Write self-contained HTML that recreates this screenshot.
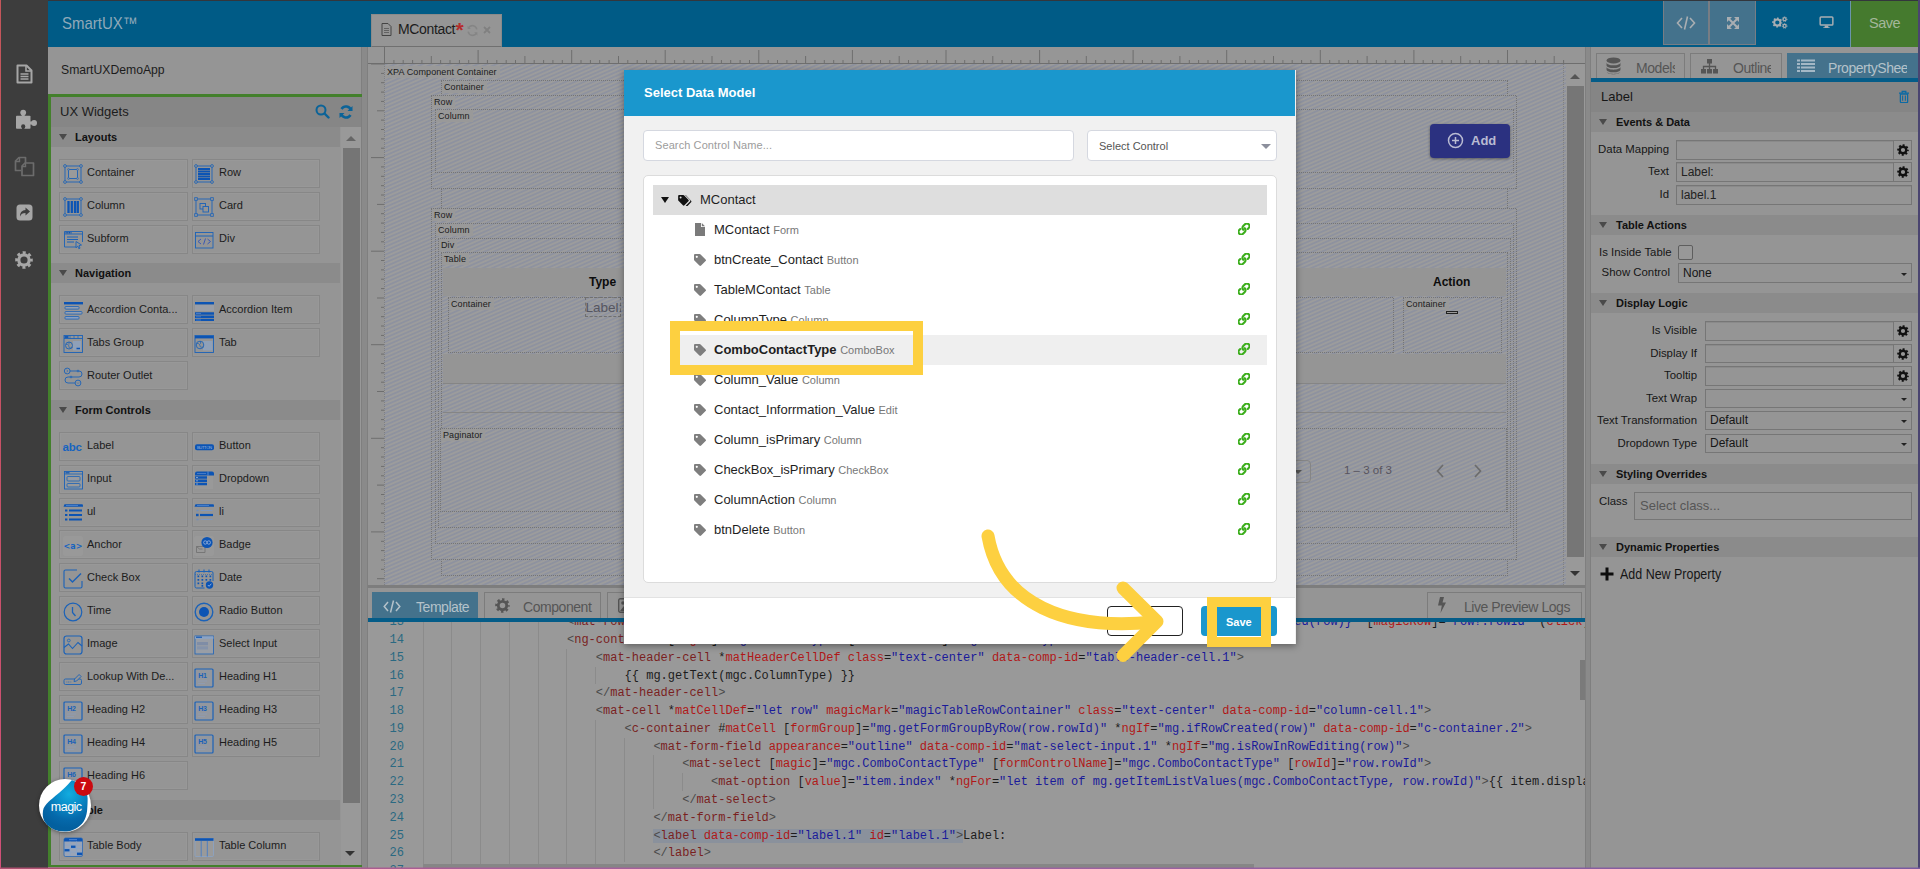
<!DOCTYPE html><html><head><meta charset="utf-8"><title>SmartUX</title><style>
*{box-sizing:border-box;margin:0;padding:0}
html,body{width:1920px;height:869px;overflow:hidden;background:#959595;font-family:"Liberation Sans",sans-serif;font-size:11px;color:#1f1f1f}
.abs{position:absolute}
#root{position:absolute;left:0;top:0;width:1920px;height:869px;overflow:hidden;background:#959595}
.t{position:absolute;white-space:nowrap;line-height:1}
/* left rail */
#rail{left:0;top:0;width:48px;height:869px;background:#3d3d3d}
#topbar{left:48px;top:0;width:1872px;height:47px;background:#005b86}
/* widgets */
.wb{position:absolute;width:129px;height:29px;border:1px solid #878787;background:#959595;box-shadow:inset 0 0 0 1px #989898}
.wb span{position:absolute;left:27px;top:6px;font-size:11px;line-height:13px;color:#1c1c1c;white-space:nowrap}
.wb svg{position:absolute;left:3px;top:4px;width:20px;height:20px}
.wr{width:128px}.wr span{left:26px}.wr svg{left:1px}
.wd span{top:7px}.wd svg{top:5px}
.sec{position:absolute;left:51px;width:289px;height:20px;background:#8b8b8b}
.sec b{position:absolute;left:24px;top:4px;font-size:11px;line-height:13px;color:#111}
.sec i{position:absolute;left:8px;top:7px;width:0;height:0;border-left:4px solid transparent;border-right:4px solid transparent;border-top:6px solid #4a4a4a}
</style></head><body><div id="root">
<div id="topbar" class="abs"></div>
<div class="t" style="left:62px;top:15px;font-size:17px;color:#8fa9b9;transform:scaleX(.88);transform-origin:0 0">SmartUX™</div>
<div class="abs" style="left:371px;top:14px;width:131px;height:33px;background:#959595;border:1px solid #8a8a8a;border-bottom:1px solid #707070"></div>
<svg class="abs" style="left:381px;top:23px" width="11" height="13" viewBox="0 0 11 13"><path d="M1 .5h6l3 3v9H1z" fill="none" stroke="#444" stroke-width="1"/><path d="M3 5.500h5M3 7.500h5M3 9.500h5" stroke="#555" stroke-width=".8"/></svg>
<div class="t" style="left:398px;top:22px;font-size:14px;color:#1c1c1c;letter-spacing:-0.35px">MContact</div>
<div class="t" style="left:455.500px;top:18.500px;font-size:21px;font-weight:700;color:#b42c2c">*</div>
<svg class="abs" style="left:466px;top:23.500px" width="13" height="13" viewBox="0 0 12 12"><path d="M10 5A4.2 4.2 0 0 0 2.3 3.5M2 7a4.2 4.2 0 0 0 7.7 1.5" fill="none" stroke="#858585" stroke-width="1.4"/><path d="M1.5 1.5v3h3zM10.5 10.5v-3h-3z" fill="#858585"/></svg>
<svg class="abs" style="left:483px;top:26px" width="8" height="8" viewBox="0 0 8 8"><path d="M1 1l6 6M7 1l-6 6" stroke="#808080" stroke-width="1.8"/></svg>
<div class="abs" style="left:1663px;top:1px;width:46px;height:44px;background:#44728c;border:1px solid #787d84;border-top:none"></div>
<div class="abs" style="left:1709px;top:1px;width:47px;height:44px;background:#44728c;border:1px solid #787d84;border-top:none"></div>
<svg class="abs" style="left:1676px;top:15px" width="20" height="16" viewBox="0 0 20 16"><path d="M6 3L1.5 8 6 13M14 3l4.500 5L14 13M11.500 1.500L8.500 14.500" fill="none" stroke="#a9aeb2" stroke-width="1.6"/></svg>
<svg class="abs" style="left:1726px;top:16px" width="14" height="14" viewBox="0 0 14 14"><path d="M2.500 2.500l9 9M11.500 2.500l-9 9" stroke="#a9aeb2" stroke-width="2"/><path d="M1 1h5L1 6zM13 1H8l5 5zM1 13h5L1 8zM13 13H8l5-5z" fill="#a9aeb2"/></svg>
<svg class="abs" style="left:1772px;top:15px" width="16" height="15" viewBox="0 0 16 15"><circle cx="5.300" cy="7.500" r="3.100" fill="none" stroke="#a9aeb2" stroke-width="2"/><circle cx="5.300" cy="7.500" r="4.300" fill="none" stroke="#a9aeb2" stroke-width="1.600" stroke-dasharray="1.700 1.677" stroke-dashoffset=".8"/><circle cx="12.600" cy="4.200" r="1.500" fill="none" stroke="#a9aeb2" stroke-width="1.300"/><circle cx="12.600" cy="4.200" r="2.400" fill="none" stroke="#a9aeb2" stroke-width=".9" stroke-dasharray=".95 .935"/><circle cx="12.600" cy="10.900" r="1.500" fill="none" stroke="#a9aeb2" stroke-width="1.300"/><circle cx="12.600" cy="10.900" r="2.400" fill="none" stroke="#a9aeb2" stroke-width=".9" stroke-dasharray=".95 .935"/></svg>
<svg class="abs" style="left:1819px;top:15.500px" width="15" height="12.700" viewBox="0 0 16 14"><rect x="1" y="1" width="14" height="9" rx="1" fill="none" stroke="#a9aeb2" stroke-width="1.600"/><path d="M6 10.500h4v2h1.500v1h-7v-1H6z" fill="#a9aeb2"/></svg>
<div class="abs" style="left:1851px;top:0;width:67px;height:47px;background:#457a2e"></div>
<div class="abs" style="left:1850px;top:1px;width:1px;height:46px;background:#6a94ac"></div>
<div class="t" style="left:1869px;top:16px;font-size:14.500px;letter-spacing:-.5px;color:#a4b79a">Save</div>
<div class="abs" style="left:0;top:0;width:1920px;height:1px;background:#33363c"></div>
<div id="rail" class="abs"></div>
<div class="abs" style="left:0;top:0;width:1px;height:869px;background:linear-gradient(180deg,#c4565a,#c85068 60%,#d05078)"></div>
<svg class="abs" style="left:16px;top:63.500px" width="17" height="20" viewBox="0 0 17 20"><path d="M1.500 1.500h9l5 5v12h-14z" fill="none" stroke="#a6a6a6" stroke-width="2" stroke-linejoin="round"/><path d="M10 1.500v5.500h5.500" fill="none" stroke="#a6a6a6" stroke-width="1.600"/><path d="M4.500 10h8M4.500 12.500h8M4.500 15h8" stroke="#a6a6a6" stroke-width="1.400"/></svg>
<svg class="abs" style="left:15px;top:108px" width="24" height="23" viewBox="15 108 24 23"><rect x="16" y="115.700" width="14.500" height="13" rx=".8" fill="#a6a6a6"/><circle cx="23.200" cy="112.600" r="2.900" fill="#a6a6a6"/><rect x="21.700" y="113" width="3" height="4" fill="#a6a6a6"/><circle cx="34.100" cy="123" r="2.900" fill="#a6a6a6"/><rect x="30" y="121.500" width="3.500" height="3" fill="#a6a6a6"/><circle cx="23.200" cy="126.400" r="2.100" fill="#3d3d3d"/><rect x="22" y="127" width="2.400" height="2" fill="#3d3d3d"/></svg>
<svg class="abs" style="left:14px;top:156px" width="21" height="21" viewBox="0 0 21 21"><path d="M7 14.500H1.500V5l3.500-3.500h6.500V7" fill="none" stroke="#6c6c6c" stroke-width="1.700" stroke-linejoin="round"/><path d="M5.500 1.500V5.500H1.500" fill="none" stroke="#6c6c6c" stroke-width="1.400"/><path d="M8 10l3-3h8.500v12.500H8z" fill="none" stroke="#6c6c6c" stroke-width="1.700" stroke-linejoin="round"/><path d="M11.500 7v3.500H8" fill="none" stroke="#6c6c6c" stroke-width="1.400"/></svg>
<svg class="abs" style="left:16px;top:204px" width="17" height="17" viewBox="0 0 17 17"><rect x=".5" y=".5" width="16" height="16" rx="3.500" fill="#a6a6a6"/><path d="M9.500 3.500l4.500 4-4.500 4V9C6.500 9 5 10 4 12.500 4 8.500 6 6.300 9.500 6z" fill="#3d3d3d"/></svg>
<svg class="abs" style="left:15px;top:251px" width="18" height="18" viewBox="0 0 18 18"><circle cx="9" cy="9" r="5.200" fill="none" stroke="#a6a6a6" stroke-width="3.200"/><circle cx="9" cy="9" r="7.300" fill="none" stroke="#a6a6a6" stroke-width="3" stroke-dasharray="3 2.730" stroke-dashoffset="1.500"/></svg>
<div class="t" style="left:61px;top:64px;font-size:12.200px;color:#1c1c1c">SmartUXDemoApp</div>
<div class="abs" style="left:361px;top:47px;width:7px;height:822px;background:#8a8a8a;border-left:1px solid #7f7f7f;border-right:1px solid #7f7f7f"></div>
<div class="abs" style="left:48px;top:94px;width:314px;height:773px;border:3px solid #43802c;border-right:none;border-bottom-width:2px"></div>
<div class="abs" style="left:51px;top:97px;width:310px;height:30px;background:#868686"></div>
<div class="t" style="left:60px;top:105px;font-size:13px;color:#1c1c1c">UX Widgets</div>
<svg class="abs" style="left:315px;top:104px" width="15" height="15" viewBox="0 0 15 15"><circle cx="6" cy="6" r="4.500" fill="none" stroke="#0b6398" stroke-width="2"/><path d="M9.500 9.500l4 4" stroke="#0b6398" stroke-width="2.400" stroke-linecap="round"/></svg>
<svg class="abs" style="left:339px;top:105px" width="14" height="14" viewBox="0 0 14 14"><path d="M12 5.500A5.200 5.200 0 0 0 2.500 4M2 8.500A5.200 5.200 0 0 0 11.500 10" fill="none" stroke="#0b6398" stroke-width="2.500"/><path d="M13.500 1v5h-5zM.5 13V8h5z" fill="#0b6398"/></svg>
<div class="abs" style="left:341px;top:127px;width:20px;height:738px;background:#999"></div>
<div class="abs" style="left:343px;top:148px;width:17px;height:655px;background:#757575"></div>
<div class="abs" style="left:346px;top:136px;width:0;height:0;border-left:5px solid transparent;border-right:5px solid transparent;border-bottom:5px solid #666"></div>
<div class="abs" style="left:345px;top:851px;width:0;height:0;border-left:5px solid transparent;border-right:5px solid transparent;border-top:5px solid #333"></div>
<div class="sec" style="top:127px"><i></i><b>Layouts</b></div>
<div class="sec" style="top:263px"><i></i><b>Navigation</b></div>
<div class="sec" style="top:400px"><i></i><b>Form Controls</b></div>
<div class="sec" style="top:800px"><i></i><b>Table</b></div>
<div class="wb" style="left:59px;top:159px"><svg viewBox="0 0 20 20"><rect x="2" y="2" width="16" height="16" fill="none" stroke="#1b62b8" stroke-width=".9"/><rect x="5.500" y="5.500" width="9" height="9" fill="#9a9a9a" stroke="#1b62b8" stroke-width=".9"/><circle cx="2" cy="2" r="1.4" fill="#959595" stroke="#1b62b8" stroke-width=".8"/><circle cx="18" cy="2" r="1.4" fill="#959595" stroke="#1b62b8" stroke-width=".8"/><circle cx="2" cy="18" r="1.4" fill="#959595" stroke="#1b62b8" stroke-width=".8"/><circle cx="18" cy="18" r="1.4" fill="#959595" stroke="#1b62b8" stroke-width=".8"/><circle cx="5.5" cy="5.5" r=".9" fill="#959595" stroke="#1b62b8" stroke-width=".6"/><circle cx="14.5" cy="5.5" r=".9" fill="#959595" stroke="#1b62b8" stroke-width=".6"/><circle cx="5.5" cy="14.5" r=".9" fill="#959595" stroke="#1b62b8" stroke-width=".6"/><circle cx="14.5" cy="14.5" r=".9" fill="#959595" stroke="#1b62b8" stroke-width=".6"/></svg><span>Container</span></div>
<div class="wb wr" style="left:192px;top:159px"><svg viewBox="0 0 20 20"><rect x="2" y="2" width="16" height="16" fill="none" stroke="#1b62b8" stroke-width=".9"/><path d="M4 5h12M4 7.500h12M4 10h12M4 12.500h12M4 15h12" stroke="#0c54b4" stroke-width="1.900"/><circle cx="2" cy="2" r="1.4" fill="#959595" stroke="#1b62b8" stroke-width=".8"/><circle cx="18" cy="2" r="1.4" fill="#959595" stroke="#1b62b8" stroke-width=".8"/><circle cx="2" cy="18" r="1.4" fill="#959595" stroke="#1b62b8" stroke-width=".8"/><circle cx="18" cy="18" r="1.4" fill="#959595" stroke="#1b62b8" stroke-width=".8"/></svg><span>Row</span></div>
<div class="wb" style="left:59px;top:192px"><svg viewBox="0 0 20 20"><rect x="2" y="2" width="16" height="16" fill="none" stroke="#1b62b8" stroke-width=".9"/><path d="M5.500 4v12M8.800 4v12M12 4v12M14.800 4v12" stroke="#0c54b4" stroke-width="2.300"/><circle cx="2" cy="2" r="1.4" fill="#959595" stroke="#1b62b8" stroke-width=".8"/><circle cx="18" cy="2" r="1.4" fill="#959595" stroke="#1b62b8" stroke-width=".8"/><circle cx="2" cy="18" r="1.4" fill="#959595" stroke="#1b62b8" stroke-width=".8"/><circle cx="18" cy="18" r="1.4" fill="#959595" stroke="#1b62b8" stroke-width=".8"/></svg><span>Column</span></div>
<div class="wb wr" style="left:192px;top:192px"><svg viewBox="0 0 20 20"><rect x="2" y="2" width="16" height="16" fill="none" stroke="#1b62b8" stroke-width=".9"/><rect x="0.7" y="0.7" width="2.600" height="2.600" fill="#959595" stroke="#1b62b8" stroke-width=".8"/><rect x="16.7" y="0.7" width="2.600" height="2.600" fill="#959595" stroke="#1b62b8" stroke-width=".8"/><rect x="0.7" y="16.7" width="2.600" height="2.600" fill="#959595" stroke="#1b62b8" stroke-width=".8"/><rect x="16.7" y="16.7" width="2.600" height="2.600" fill="#959595" stroke="#1b62b8" stroke-width=".8"/><rect x="6" y="6.500" width="5.500" height="5.500" fill="none" stroke="#1b62b8" stroke-width=".9"/><rect x="9" y="9.500" width="5.500" height="5.500" fill="#959595" stroke="#1b62b8" stroke-width=".9"/></svg><span>Card</span></div>
<div class="wb" style="left:59px;top:225px"><svg viewBox="0 0 20 20"><path d="M13 17H1.500V1.500h18V12" fill="none" stroke="#1b62b8" stroke-width=".9"/><path d="M1.500 4h18" stroke="#1b62b8" stroke-width=".9"/><path d="M2.500 2.700h6" stroke="#0c54b4" stroke-width="1.400" stroke-dasharray="1.200 .5"/><path d="M4 7h11M4 9.500h11M4 12h7" stroke="#1b62b8" stroke-width="1"/><path d="M13 11.500l5.500 3.500-2.500.6 1 2.600-1.200.5-1-2.600-1.800 1.700z" fill="#959595" stroke="#1b62b8" stroke-width=".9" stroke-linejoin="round"/></svg><span>Subform</span></div>
<div class="wb wr" style="left:192px;top:225px"><svg viewBox="0 0 20 20"><rect x="1.500" y="2.500" width="17.500" height="15.500" fill="none" stroke="#1b62b8" stroke-width=".9"/><path d="M1.500 6h17.500" stroke="#1b62b8" stroke-width="1"/><path d="M7 9L4 11.500 7 14M13.500 9l3 2.500-3 2.500M11.500 8.500l-2 6" fill="none" stroke="#3a58b4" stroke-width="1"/></svg><span>Div</span></div>
<div class="wb wd" style="left:59px;top:295px"><svg viewBox="0 0 20 20"><path d="M1 2.200h19" stroke="#0c54b4" stroke-width="2.400"/><rect x="2" y="5.500" width="14" height="2.600" rx=".8" fill="#96a0b0" stroke="#1b62b8" stroke-width=".8"/><rect x="2" y="10.500" width="17" height="2.600" rx=".8" fill="#96a0b0" stroke="#1b62b8" stroke-width=".8"/><rect x="2" y="15.500" width="14" height="2.600" rx=".8" fill="#8aa0c0" stroke="#1b62b8" stroke-width=".8"/></svg><span>Accordion Conta...</span></div>
<div class="wb wr wd" style="left:192px;top:295px"><svg viewBox="0 0 20 20"><path d="M1 2.200h19" stroke="#0c54b4" stroke-width="2.400"/><rect x="1" y="4" width="19" height="6" fill="#9a9ea6"/><path d="M1 12.500h19M1 15.800h19M1 19h19" stroke="#0c54b4" stroke-width="2.500"/><path d="M2 12.500h5M2 15.800h5M2 19h5" stroke="#5a8ad0" stroke-width=".7"/></svg><span>Accordion Item</span></div>
<div class="wb wd" style="left:59px;top:328px"><svg viewBox="0 0 20 20"><rect x="1" y="1.500" width="18.500" height="17" fill="none" stroke="#1b62b8" stroke-width=".9"/><path d="M1 4.500h18.500" stroke="#1b62b8" stroke-width=".9"/><path d="M1.500 3h4" stroke="#0c54b4" stroke-width="1.800"/><path d="M7 1.500v3M11 1.500v3M15 1.500v3" stroke="#1b62b8" stroke-width=".7"/><rect x="10" y="7" width="8" height="9.500" fill="#8fa0b8"/><path d="M13.500 14.500h3.500" stroke="#0c54b4" stroke-width="1.500"/><circle cx="6" cy="11.500" r="3.500" fill="none" stroke="#1b62b8" stroke-width=".9"/><path d="M3 10.500c2-1 3 1 3 2.500s2 1 3.500.5M6 8v2.500" fill="none" stroke="#1b62b8" stroke-width=".7"/></svg><span>Tabs Group</span></div>
<div class="wb wr wd" style="left:192px;top:328px"><svg viewBox="0 0 20 20"><rect x="1" y="1.500" width="18.500" height="17" fill="none" stroke="#1b62b8" stroke-width=".9"/><path d="M1 3.200h18.500" stroke="#0c54b4" stroke-width="2.400"/><rect x="9" y="7" width="9.500" height="9.500" fill="#8fa0b8"/><circle cx="6" cy="11" r="3.800" fill="#959595" stroke="#1b62b8" stroke-width=".9"/><path d="M2.800 9.500c2-.5 3.200 1 3.200 2.500s2 1.500 3.500.8M6.500 7.300v2.500" fill="none" stroke="#1b62b8" stroke-width=".7"/></svg><span>Tab</span></div>
<div class="wb wd" style="left:59px;top:361px"><svg viewBox="0 0 20 20"><circle cx="4.200" cy="4" r="2.900" fill="none" stroke="#1b62b8" stroke-width=".9"/><circle cx="15" cy="16" r="2.900" fill="none" stroke="#1b62b8" stroke-width=".9"/><path d="M7 4h9a3 3 0 0 1 0 6H5a3 3 0 0 0 0 6h7" fill="none" stroke="#1b62b8" stroke-width=".9"/><circle cx="15" cy="4" r=".9" fill="none" stroke="#1b62b8" stroke-width=".7"/><circle cx="8" cy="10" r=".9" fill="none" stroke="#1b62b8" stroke-width=".7"/><path d="M3.600 3l1.300 1-1.300 1M14 15.500l1 1 1-1" fill="none" stroke="#1b62b8" stroke-width=".6"/></svg><span>Router Outlet</span></div>
<div class="wb" style="left:59px;top:432px"><svg viewBox="0 0 20 20"><text x="-.5" y="14.300" font-family="Liberation Sans,sans-serif" font-size="11.500" font-weight="700" fill="#1764c0" letter-spacing="-.2">abc</text></svg><span>Label</span></div>
<div class="wb wr" style="left:192px;top:432px"><svg viewBox="0 0 20 20"><rect x="1" y="7.200" width="19" height="6" rx="2" fill="#0c54b4"/><text x="10.500" y="12" font-family="Liberation Sans,sans-serif" font-size="4.200" fill="#9ab4dc" text-anchor="middle" textLength="15">BUTTON</text></svg><span>Button</span></div>
<div class="wb" style="left:59px;top:465px"><svg viewBox="0 0 20 20"><rect x="1.500" y="1.500" width="18" height="17.500" fill="#93999f" stroke="#1b62b8" stroke-width=".9"/><path d="M1.500 4h18" stroke="#1b62b8" stroke-width=".8"/><path d="M2.500 2.800h4" stroke="#0c54b4" stroke-width="1.200"/><rect x="4" y="6.500" width="13" height="4.500" rx="1" fill="#9a9a9a" stroke="#1b62b8" stroke-width=".8"/><rect x="4" y="13.500" width="13" height="3.500" rx="1" fill="#9a9a9a" stroke="#1b62b8" stroke-width=".8"/><path d="M6 9h8" stroke="#8fa0b8" stroke-width=".8"/></svg><span>Input</span></div>
<div class="wb wr" style="left:192px;top:465px"><svg viewBox="0 0 20 20"><rect x="1" y="6" width="18" height="13" fill="#999"/><path d="M1 5.500V3.500a2 2 0 0 1 2-2h15a2 2 0 0 1 2 2v2z" fill="#0c54b4"/><path d="M14 1.500v4" stroke="#8fb0e0" stroke-width=".6"/><path d="M3 3.500h9" stroke="#5a8ad0" stroke-width=".7"/><path d="M1 7.500h12M1 10.800h12M1 14h12" stroke="#0c54b4" stroke-width="2.500"/><path d="M2 7.500h2M2 10.800h2M2 14h2" stroke="#8fb0e0" stroke-width=".8"/></svg><span>Dropdown</span></div>
<div class="wb" style="left:59px;top:498px"><svg viewBox="0 0 20 20"><path d="M1.500 1.300h18l1 2.500H.5z" fill="#0c54b4"/><path d="M3 2.500h12" stroke="#6a98dc" stroke-width=".6"/><path d="M2 7.500h2.400M2 12h2.400M2 16.500h2.400" stroke="#0c54b4" stroke-width="2.200"/><path d="M6 7.500h13M6 12h13M6 16.500h13" stroke="#0c54b4" stroke-width="1.900"/></svg><span>ul</span></div>
<div class="wb wr" style="left:192px;top:498px"><svg viewBox="0 0 20 20"><path d="M1.500 1.300h18l1 2.500H.5z" fill="#0c54b4"/><path d="M3 2.500h12" stroke="#6a98dc" stroke-width=".6"/><path d="M2.500 7.500h2M2.500 16.500h2" stroke="#6f8fc0" stroke-width="1.600"/><path d="M6.500 7.500h12M6.500 16.500h12" stroke="#7f98c0" stroke-width="1.200"/><path d="M2 12h2.600" stroke="#0c54b4" stroke-width="2.400"/><path d="M6 12h13" stroke="#0c54b4" stroke-width="2.200"/></svg><span>li</span></div>
<div class="wb wd" style="left:59px;top:530px"><svg viewBox="0 0 20 20"><rect x="0" y="0" width="20" height="20" rx="2" fill="#999"/><text x="10" y="13" font-family="DejaVu Sans,sans-serif" font-size="8" font-weight="700" fill="#1764c0" text-anchor="middle">&lt;a&gt;</text></svg><span>Anchor</span></div>
<div class="wb wr wd" style="left:192px;top:530px"><svg viewBox="0 0 20 20"><rect x="0" y="0" width="20" height="20" rx="2" fill="#999"/><path d="M2.500 10.500h8.500v6H2.500zM2.500 10.500l3 2.500h3" fill="none" stroke="#6e6e6e" stroke-width=".8"/><circle cx="13" cy="6.500" r="5.600" fill="#0c54b4"/><circle cx="11.300" cy="6.500" r="1.700" fill="none" stroke="#9ab4dc" stroke-width=".8"/><circle cx="14.800" cy="6.500" r="1.700" fill="none" stroke="#9ab4dc" stroke-width=".8"/></svg><span>Badge</span></div>
<div class="wb wd" style="left:59px;top:563px"><svg viewBox="0 0 20 20"><path d="M14 1H2.500a1.500 1.500 0 0 0-1.500 1.500v15A1.500 1.500 0 0 0 2.500 19h15a1.500 1.500 0 0 0 1.500-1.500V12" fill="none" stroke="#1b62b8" stroke-width="1.100"/><path d="M6 9.500l3.500 3.500L18 4.500" fill="none" stroke="#1b62b8" stroke-width="1.500"/></svg><span>Check Box</span></div>
<div class="wb wr wd" style="left:192px;top:563px"><svg viewBox="0 0 20 20"><path d="M10.500 19H2.500a1.500 1.500 0 0 1-1.500-1.500V4a1.500 1.500 0 0 1 1.500-1.500h15A1.500 1.500 0 0 1 19 4v8" fill="none" stroke="#1b62b8" stroke-width="1"/><path d="M5 .5v3M10 .5v3M15 .5v3" stroke="#1b62b8" stroke-width="1.100"/><path d="M1 5.500h18" stroke="#1b62b8" stroke-width=".6" stroke-dasharray="1 1"/><rect x="3.5" y="6.5" width="1.700" height="1.700" fill="#0c54b4"/><rect x="7.5" y="6.5" width="1.700" height="1.700" fill="#0c54b4"/><rect x="11.5" y="6.5" width="1.700" height="1.700" fill="#0c54b4"/><rect x="15.5" y="6.5" width="1.700" height="1.700" fill="#0c54b4"/><rect x="3.5" y="10" width="1.700" height="1.700" fill="#0c54b4"/><rect x="7.5" y="10" width="1.700" height="1.700" fill="#0c54b4"/><rect x="11.5" y="10" width="1.700" height="1.700" fill="#0c54b4"/><rect x="15.5" y="10" width="1.700" height="1.700" fill="#0c54b4"/><rect x="3.5" y="13.5" width="1.700" height="1.700" fill="#0c54b4"/><rect x="7.5" y="13.5" width="1.700" height="1.700" fill="#0c54b4"/><rect x="7.500" y="16" width="1.700" height="1.700" fill="#0c54b4"/><circle cx="15.500" cy="16" r="3.700" fill="#0c54b4"/><path d="M13.800 16l1.300 1.300 2.300-2.600" fill="none" stroke="#9ab4dc" stroke-width=".9"/></svg><span>Date</span></div>
<div class="wb wd" style="left:59px;top:596px"><svg viewBox="0 0 20 20"><circle cx="10" cy="10" r="8.800" fill="none" stroke="#1b62b8" stroke-width="1.200"/><path d="M9.500 5v5.500l3 3.500" fill="none" stroke="#1b62b8" stroke-width="1.300"/></svg><span>Time</span></div>
<div class="wb wr wd" style="left:192px;top:596px"><svg viewBox="0 0 20 20"><circle cx="10" cy="10" r="8.800" fill="none" stroke="#1b62b8" stroke-width="1.400"/><circle cx="10" cy="10" r="5" fill="#0c54b4"/></svg><span>Radio Button</span></div>
<div class="wb wd" style="left:59px;top:629px"><svg viewBox="0 0 20 20"><rect x="1" y="1" width="18" height="18" rx="2.500" fill="none" stroke="#1b62b8" stroke-width="1.200"/><path d="M1 12.500l4.500-3.500 4 4.500 5.500-6 4 3.500" fill="none" stroke="#1b62b8" stroke-width="1.100"/><circle cx="5.800" cy="5.500" r="1.400" fill="none" stroke="#1b62b8" stroke-width=".8"/></svg><span>Image</span></div>
<div class="wb wr wd" style="left:192px;top:629px"><svg viewBox="0 0 20 20"><rect x="1" y="1" width="18.500" height="18" fill="#999ea6" stroke="#1b62b8" stroke-width=".8"/><path d="M1 2.600h18.500" stroke="#8aa3c6" stroke-width="2.400"/><path d="M2 2.200h6" stroke="#0c54b4" stroke-width="1.200"/><rect x="3" y="7" width="11" height="3.200" fill="#7f8da6"/><rect x="3" y="11.300" width="11" height="3.200" fill="#8593aa"/></svg><span>Select Input</span></div>
<div class="wb wd" style="left:59px;top:662px"><svg viewBox="0 0 20 20"><rect x="1" y="11" width="17.500" height="5.500" rx="1.500" fill="none" stroke="#1b62b8" stroke-width=".9"/><path d="M3.500 14h5" stroke="#1b62b8" stroke-width=".8" stroke-dasharray=".8 .8"/><path d="M11 13.500l.6-2.500 4.500-4.500 2 2-4.500 4.500z" fill="#959595" stroke="#1b62b8" stroke-width=".9" stroke-linejoin="round"/></svg><span>Lookup With De...</span></div>
<div class="wb wr wd" style="left:192px;top:662px"><svg viewBox="0 0 20 20"><rect x="1" y="1" width="18" height="18" rx="1" fill="#93979e" stroke="#1b62b8" stroke-width="1.200"/><text x="8.500" y="9.800" font-family="Liberation Sans,sans-serif" font-size="7" font-weight="700" fill="#1b62b8" text-anchor="middle" letter-spacing="-.3">H1</text><path d="M4 13h9M4 15.500h7" stroke="#8f9bb0" stroke-width="1.200"/></svg><span>Heading H1</span></div>
<div class="wb wd" style="left:59px;top:695px"><svg viewBox="0 0 20 20"><rect x="1" y="1" width="18" height="18" rx="1" fill="#93979e" stroke="#1b62b8" stroke-width="1.200"/><text x="8.500" y="9.800" font-family="Liberation Sans,sans-serif" font-size="7" font-weight="700" fill="#1b62b8" text-anchor="middle" letter-spacing="-.3">H2</text><path d="M4 13h9M4 15.500h7" stroke="#8f9bb0" stroke-width="1.200"/></svg><span>Heading H2</span></div>
<div class="wb wr wd" style="left:192px;top:695px"><svg viewBox="0 0 20 20"><rect x="1" y="1" width="18" height="18" rx="1" fill="#93979e" stroke="#1b62b8" stroke-width="1.200"/><text x="8.500" y="9.800" font-family="Liberation Sans,sans-serif" font-size="7" font-weight="700" fill="#1b62b8" text-anchor="middle" letter-spacing="-.3">H3</text><path d="M4 13h9M4 15.500h7" stroke="#8f9bb0" stroke-width="1.200"/></svg><span>Heading H3</span></div>
<div class="wb wd" style="left:59px;top:728px"><svg viewBox="0 0 20 20"><rect x="1" y="1" width="18" height="18" rx="1" fill="#93979e" stroke="#1b62b8" stroke-width="1.200"/><text x="8.500" y="9.800" font-family="Liberation Sans,sans-serif" font-size="7" font-weight="700" fill="#1b62b8" text-anchor="middle" letter-spacing="-.3">H4</text><path d="M4 13h9M4 15.500h7" stroke="#8f9bb0" stroke-width="1.200"/></svg><span>Heading H4</span></div>
<div class="wb wr wd" style="left:192px;top:728px"><svg viewBox="0 0 20 20"><rect x="1" y="1" width="18" height="18" rx="1" fill="#93979e" stroke="#1b62b8" stroke-width="1.200"/><text x="8.500" y="9.800" font-family="Liberation Sans,sans-serif" font-size="7" font-weight="700" fill="#1b62b8" text-anchor="middle" letter-spacing="-.3">H5</text><path d="M4 13h9M4 15.500h7" stroke="#8f9bb0" stroke-width="1.200"/></svg><span>Heading H5</span></div>
<div class="wb wd" style="left:59px;top:761px"><svg viewBox="0 0 20 20"><rect x="1" y="1" width="18" height="18" rx="1" fill="#93979e" stroke="#1b62b8" stroke-width="1.200"/><text x="8.500" y="9.800" font-family="Liberation Sans,sans-serif" font-size="7" font-weight="700" fill="#1b62b8" text-anchor="middle" letter-spacing="-.3">H6</text><path d="M4 13h9M4 15.500h7" stroke="#8f9bb0" stroke-width="1.200"/></svg><span>Heading H6</span></div>
<div class="wb" style="left:59px;top:832px"><svg viewBox="0 0 20 20"><rect x="1" y="1" width="18.500" height="18.500" rx="1.500" fill="#9aa4b6"/><path d="M1 4.500V2.500A1.500 1.500 0 0 1 2.500 1h15.500a1.500 1.500 0 0 1 1.500 1.500v2z" fill="#0c54b4"/><path d="M6 2.700h8" stroke="#6a98dc" stroke-width=".8"/><path d="M1 8h18.500M1 11.500h18.500M1 15h18.500M7 4.500v15M13.500 4.500v15" stroke="#8aa3c6" stroke-width=".8"/><rect x="8" y="8.600" width="4.500" height="2.300" fill="#0c54b4"/><rect x="1.500" y="12.100" width="5" height="2.300" fill="#0c54b4"/><rect x="14" y="15.600" width="5" height="2.600" fill="#0c54b4"/><rect x="1" y="1" width="18.500" height="18.500" rx="1.500" fill="none" stroke="#1b62b8" stroke-width=".7"/></svg><span>Table Body</span></div>
<div class="wb wr" style="left:192px;top:832px"><svg viewBox="0 0 20 20"><rect x="1" y="1.500" width="18.500" height="18" rx="1" fill="#9a9a9a" stroke="#8aa3c6" stroke-width=".8"/><path d="M1 2.500h18.500" stroke="#0c54b4" stroke-width="2.600"/><path d="M7.200 4v15.500M13.300 4v15.500" stroke="#4f7fc0" stroke-width="1"/></svg><span>Table Column</span></div>
<div class="abs" style="left:39px;top:779px;width:52px;height:53px;border-radius:50%;background:#fff;box-shadow:0 1px 4px rgba(0,0,0,.4)"></div>
<svg class="abs" style="left:39px;top:779px" width="52" height="53" viewBox="0 0 52 53"><defs><radialGradient id="mg" cx="30" cy="15" r="34" gradientUnits="userSpaceOnUse"><stop offset="0" stop-color="#12acdf"/><stop offset=".35" stop-color="#0a8fcb"/><stop offset=".75" stop-color="#0569ab"/><stop offset="1" stop-color="#03609f"/></radialGradient><clipPath id="mc"><ellipse cx="26" cy="26.500" rx="26" ry="26.500"/></clipPath></defs><path clip-path="url(#mc)" d="M33 1C30 4.500 28 6.500 26.500 8 23 11.500 21 13 19 14.700 15 18 12 20.500 9.600 22.800 6.500 26 4.500 28.500 4 31.700 3.300 36 4 40 5.900 43.400 8.500 47.500 12.500 50.300 16.900 51.500 20.500 52.400 24.500 52.700 28 52.400 32 52 36 50.500 39 48.200 42 46 44.300 43.500 45.700 40.500 47.300 37 48 33.500 48.200 30.200 48.500 26.500 48.700 22.500 48.600 19.100 48.400 15.500 47.500 13.500 46.400 11.800 43.500 7.500 38 3 33 1z" fill="url(#mg)"/><text x="27.200" y="32.400" font-family="Liberation Sans,sans-serif" font-size="12.500" fill="#fff" text-anchor="middle" letter-spacing="-.5">magic</text></svg>
<div class="abs" style="left:74px;top:776.500px;width:19px;height:19px;border-radius:50%;background:#cb0a10"></div>
<div class="t" style="left:80.500px;top:781px;font-size:10.500px;font-weight:700;color:#fff">7</div>
<div class="abs" style="left:368px;top:47px;width:1217px;height:540px;background:#969696"></div>
<div class="abs" style="left:384px;top:64px;width:1182px;height:521px;background:repeating-linear-gradient(156.7deg,#8e929f 0,#8e929f .9px,#9c9c9c 1.820px,#9c9c9c 2.720px,#8e929f 3.640px) fixed"></div>
<div class="abs" style="left:368px;top:63px;width:1217px;height:1px;background:#6e6e6e"></div>
<div class="abs" style="left:384px;top:47px;width:1px;height:17px;background:#6e6e6e"></div>
<svg class="abs" style="left:384px;top:47px" width="1183" height="17" viewBox="0 0 1183 17"><path d="M0.5 16v-13M9.9 16v-3M19.2 16v-3M28.6 16v-3M37.9 16v-3M47.3 16v-7M56.6 16v-3M66.0 16v-3M75.4 16v-3M84.7 16v-3M94.1 16v-13M103.4 16v-3M112.8 16v-3M122.2 16v-3M131.5 16v-3M140.9 16v-7M150.2 16v-3M159.6 16v-3M168.9 16v-3M178.3 16v-3M187.7 16v-13M197.0 16v-3M206.4 16v-3M215.7 16v-3M225.1 16v-3M234.5 16v-7M243.8 16v-3M253.2 16v-3M262.5 16v-3M271.9 16v-3M281.2 16v-13M290.6 16v-3M300.0 16v-3M309.3 16v-3M318.7 16v-3M328.0 16v-7M337.4 16v-3M346.7 16v-3M356.1 16v-3M365.5 16v-3M374.8 16v-13M384.2 16v-3M393.5 16v-3M402.9 16v-3M412.3 16v-3M421.6 16v-7M431.0 16v-3M440.3 16v-3M449.7 16v-3M459.0 16v-3M468.4 16v-13M477.8 16v-3M487.1 16v-3M496.5 16v-3M505.8 16v-3M515.2 16v-7M524.5 16v-3M533.9 16v-3M543.3 16v-3M552.6 16v-3M562.0 16v-13M571.3 16v-3M580.7 16v-3M590.1 16v-3M599.4 16v-3M608.8 16v-7M618.1 16v-3M627.5 16v-3M636.8 16v-3M646.2 16v-3M655.6 16v-13M664.9 16v-3M674.3 16v-3M683.6 16v-3M693.0 16v-3M702.3 16v-7M711.7 16v-3M721.1 16v-3M730.4 16v-3M739.8 16v-3M749.1 16v-13M758.5 16v-3M767.9 16v-3M777.2 16v-3M786.6 16v-3M795.9 16v-7M805.3 16v-3M814.6 16v-3M824.0 16v-3M833.4 16v-3M842.7 16v-13M852.1 16v-3M861.4 16v-3M870.8 16v-3M880.2 16v-3M889.5 16v-7M898.9 16v-3M908.2 16v-3M917.6 16v-3M926.9 16v-3M936.3 16v-13M945.7 16v-3M955.0 16v-3M964.4 16v-3M973.7 16v-3M983.1 16v-7M992.4 16v-3M1001.8 16v-3M1011.2 16v-3M1020.5 16v-3M1029.9 16v-13M1039.2 16v-3M1048.6 16v-3M1058.0 16v-3M1067.3 16v-3M1076.7 16v-7M1086.0 16v-3M1095.4 16v-3M1104.7 16v-3M1114.1 16v-3M1123.5 16v-13M1132.8 16v-3M1142.2 16v-3M1151.5 16v-3M1160.9 16v-3M1170.2 16v-7M1179.6 16v-3" stroke="#6e6e6e" stroke-width="1" fill="none"/></svg>
<svg class="abs" style="left:368px;top:64px" width="17" height="521" viewBox="0 0 17 521"><path d="M16 0.0h-13M16 9.4h-3M16 18.7h-3M16 28.1h-3M16 37.4h-3M16 46.8h-7M16 56.1h-3M16 65.5h-3M16 74.9h-3M16 84.2h-3M16 93.6h-13M16 102.9h-3M16 112.3h-3M16 121.7h-3M16 131.0h-3M16 140.4h-7M16 149.7h-3M16 159.1h-3M16 168.4h-3M16 177.8h-3M16 187.2h-13M16 196.5h-3M16 205.9h-3M16 215.2h-3M16 224.6h-3M16 234.0h-7M16 243.3h-3M16 252.7h-3M16 262.0h-3M16 271.4h-3M16 280.7h-13M16 290.1h-3M16 299.5h-3M16 308.8h-3M16 318.2h-3M16 327.5h-7M16 336.9h-3M16 346.2h-3M16 355.6h-3M16 365.0h-3M16 374.3h-13M16 383.7h-3M16 393.0h-3M16 402.4h-3M16 411.8h-3M16 421.1h-7M16 430.5h-3M16 439.8h-3M16 449.2h-3M16 458.5h-3M16 467.9h-13M16 477.3h-3M16 486.6h-3M16 496.0h-3M16 505.3h-3M16 514.7h-7" stroke="#6e6e6e" stroke-width="1" fill="none"/></svg>
<div class="abs" style="left:384px;top:64px;width:1180px;height:521px;border-left:1px dotted #808080;border-right:1px dotted #808080"></div>
<div class="t" style="left:385px;top:66px;height:12px;padding:1px 3px 0 2px;background:#999;font-size:9px;line-height:11px;color:#1c1c1c;letter-spacing:.1px">XPA Component Container</div>
<div class="abs" style="left:441px;top:80px;width:1067px;height:496px;background:repeating-linear-gradient(90deg,#757575 0,#757575 1px,transparent 1px,transparent 2px) 0 0/100% 1px no-repeat,repeating-linear-gradient(90deg,#757575 0,#757575 1px,transparent 1px,transparent 2px) 0 100%/100% 1px no-repeat,repeating-linear-gradient(0deg,#757575 0,#757575 1px,transparent 1px,transparent 2px) 0 0/1px 100% no-repeat,repeating-linear-gradient(0deg,#757575 0,#757575 1px,transparent 1px,transparent 2px) 100% 0/1px 100% no-repeat,repeating-linear-gradient(156.7deg,#8e929f 0,#8e929f .9px,#9c9c9c 1.820px,#9c9c9c 2.720px,#8e929f 3.640px) fixed;"></div>
<div class="t" style="left:442px;top:81px;height:12px;padding:1px 3px 0 2px;background:#999;font-size:9px;line-height:11px;color:#1c1c1c;letter-spacing:.1px">Container</div>
<div class="abs" style="left:431px;top:95px;width:1086px;height:94px;background:repeating-linear-gradient(90deg,#757575 0,#757575 1px,transparent 1px,transparent 2px) 0 0/100% 1px no-repeat,repeating-linear-gradient(90deg,#757575 0,#757575 1px,transparent 1px,transparent 2px) 0 100%/100% 1px no-repeat,repeating-linear-gradient(0deg,#757575 0,#757575 1px,transparent 1px,transparent 2px) 0 0/1px 100% no-repeat,repeating-linear-gradient(0deg,#757575 0,#757575 1px,transparent 1px,transparent 2px) 100% 0/1px 100% no-repeat,repeating-linear-gradient(156.7deg,#8e929f 0,#8e929f .9px,#9c9c9c 1.820px,#9c9c9c 2.720px,#8e929f 3.640px) fixed;"></div>
<div class="t" style="left:432px;top:96px;height:12px;padding:1px 3px 0 2px;background:#999;font-size:9px;line-height:11px;color:#1c1c1c;letter-spacing:.1px">Row</div>
<div class="abs" style="left:435px;top:109px;width:1079px;height:64px;background:repeating-linear-gradient(90deg,#757575 0,#757575 1px,transparent 1px,transparent 2px) 0 0/100% 1px no-repeat,repeating-linear-gradient(90deg,#757575 0,#757575 1px,transparent 1px,transparent 2px) 0 100%/100% 1px no-repeat,repeating-linear-gradient(0deg,#757575 0,#757575 1px,transparent 1px,transparent 2px) 0 0/1px 100% no-repeat,repeating-linear-gradient(0deg,#757575 0,#757575 1px,transparent 1px,transparent 2px) 100% 0/1px 100% no-repeat,repeating-linear-gradient(156.7deg,#8e929f 0,#8e929f .9px,#9c9c9c 1.820px,#9c9c9c 2.720px,#8e929f 3.640px) fixed;"></div>
<div class="t" style="left:436px;top:110px;height:12px;padding:1px 3px 0 2px;background:#999;font-size:9px;line-height:11px;color:#1c1c1c;letter-spacing:.1px">Column</div>
<div class="abs" style="left:431px;top:208px;width:1086px;height:352px;background:repeating-linear-gradient(90deg,#757575 0,#757575 1px,transparent 1px,transparent 2px) 0 0/100% 1px no-repeat,repeating-linear-gradient(90deg,#757575 0,#757575 1px,transparent 1px,transparent 2px) 0 100%/100% 1px no-repeat,repeating-linear-gradient(0deg,#757575 0,#757575 1px,transparent 1px,transparent 2px) 0 0/1px 100% no-repeat,repeating-linear-gradient(0deg,#757575 0,#757575 1px,transparent 1px,transparent 2px) 100% 0/1px 100% no-repeat,repeating-linear-gradient(156.7deg,#8e929f 0,#8e929f .9px,#9c9c9c 1.820px,#9c9c9c 2.720px,#8e929f 3.640px) fixed;"></div>
<div class="t" style="left:432px;top:209px;height:12px;padding:1px 3px 0 2px;background:#999;font-size:9px;line-height:11px;color:#1c1c1c;letter-spacing:.1px">Row</div>
<div class="abs" style="left:435px;top:223px;width:1079px;height:321px;background:repeating-linear-gradient(90deg,#757575 0,#757575 1px,transparent 1px,transparent 2px) 0 0/100% 1px no-repeat,repeating-linear-gradient(90deg,#757575 0,#757575 1px,transparent 1px,transparent 2px) 0 100%/100% 1px no-repeat,repeating-linear-gradient(0deg,#757575 0,#757575 1px,transparent 1px,transparent 2px) 0 0/1px 100% no-repeat,repeating-linear-gradient(0deg,#757575 0,#757575 1px,transparent 1px,transparent 2px) 100% 0/1px 100% no-repeat,repeating-linear-gradient(156.7deg,#8e929f 0,#8e929f .9px,#9c9c9c 1.820px,#9c9c9c 2.720px,#8e929f 3.640px) fixed;"></div>
<div class="t" style="left:436px;top:224px;height:12px;padding:1px 3px 0 2px;background:#999;font-size:9px;line-height:11px;color:#1c1c1c;letter-spacing:.1px">Column</div>
<div class="abs" style="left:438px;top:238px;width:1073px;height:290px;background:repeating-linear-gradient(90deg,#757575 0,#757575 1px,transparent 1px,transparent 2px) 0 0/100% 1px no-repeat,repeating-linear-gradient(90deg,#757575 0,#757575 1px,transparent 1px,transparent 2px) 0 100%/100% 1px no-repeat,repeating-linear-gradient(0deg,#757575 0,#757575 1px,transparent 1px,transparent 2px) 0 0/1px 100% no-repeat,repeating-linear-gradient(0deg,#757575 0,#757575 1px,transparent 1px,transparent 2px) 100% 0/1px 100% no-repeat,repeating-linear-gradient(156.7deg,#8e929f 0,#8e929f .9px,#9c9c9c 1.820px,#9c9c9c 2.720px,#8e929f 3.640px) fixed;"></div>
<div class="t" style="left:439px;top:239px;height:12px;padding:1px 3px 0 2px;background:#999;font-size:9px;line-height:11px;color:#1c1c1c;letter-spacing:.1px">Div</div>
<div class="abs" style="left:441px;top:252px;width:1067px;height:260px;background:repeating-linear-gradient(90deg,#757575 0,#757575 1px,transparent 1px,transparent 2px) 0 0/100% 1px no-repeat,repeating-linear-gradient(90deg,#757575 0,#757575 1px,transparent 1px,transparent 2px) 0 100%/100% 1px no-repeat,repeating-linear-gradient(0deg,#757575 0,#757575 1px,transparent 1px,transparent 2px) 0 0/1px 100% no-repeat,repeating-linear-gradient(0deg,#757575 0,#757575 1px,transparent 1px,transparent 2px) 100% 0/1px 100% no-repeat,repeating-linear-gradient(156.7deg,#8e929f 0,#8e929f .9px,#9c9c9c 1.820px,#9c9c9c 2.720px,#8e929f 3.640px) fixed;"></div>
<div class="t" style="left:442px;top:253px;height:12px;padding:1px 3px 0 2px;background:#999;font-size:9px;line-height:11px;color:#1c1c1c;letter-spacing:.1px">Table</div>
<div class="abs" style="left:443px;top:268px;width:1063px;height:28px;background:#959595"></div>
<div class="t" style="left:589px;top:276px;font-size:12px;font-weight:700;color:#0c0c0c">Type</div>
<div class="t" style="left:1433px;top:276px;font-size:12px;font-weight:700;color:#0c0c0c">Action</div>
<div class="abs" style="left:448px;top:297px;width:946px;height:56px;background:repeating-linear-gradient(90deg,#757575 0,#757575 1px,transparent 1px,transparent 2px) 0 0/100% 1px no-repeat,repeating-linear-gradient(90deg,#757575 0,#757575 1px,transparent 1px,transparent 2px) 0 100%/100% 1px no-repeat,repeating-linear-gradient(0deg,#757575 0,#757575 1px,transparent 1px,transparent 2px) 0 0/1px 100% no-repeat,repeating-linear-gradient(0deg,#757575 0,#757575 1px,transparent 1px,transparent 2px) 100% 0/1px 100% no-repeat,repeating-linear-gradient(156.7deg,#8e929f 0,#8e929f .9px,#9c9c9c 1.820px,#9c9c9c 2.720px,#8e929f 3.640px) fixed;"></div>
<div class="t" style="left:449px;top:298px;height:12px;padding:1px 3px 0 2px;background:#999;font-size:9px;line-height:11px;color:#1c1c1c;letter-spacing:.1px">Container</div>
<div class="abs" style="left:1403px;top:297px;width:99px;height:56px;background:repeating-linear-gradient(90deg,#757575 0,#757575 1px,transparent 1px,transparent 2px) 0 0/100% 1px no-repeat,repeating-linear-gradient(90deg,#757575 0,#757575 1px,transparent 1px,transparent 2px) 0 100%/100% 1px no-repeat,repeating-linear-gradient(0deg,#757575 0,#757575 1px,transparent 1px,transparent 2px) 0 0/1px 100% no-repeat,repeating-linear-gradient(0deg,#757575 0,#757575 1px,transparent 1px,transparent 2px) 100% 0/1px 100% no-repeat,repeating-linear-gradient(156.7deg,#8e929f 0,#8e929f .9px,#9c9c9c 1.820px,#9c9c9c 2.720px,#8e929f 3.640px) fixed;"></div>
<div class="t" style="left:1404px;top:298px;height:12px;padding:1px 3px 0 2px;background:#999;font-size:9px;line-height:11px;color:#1c1c1c;letter-spacing:.1px">Container</div>
<div class="abs" style="left:585px;top:297px;width:36px;height:20px;border:1px dashed #707070"></div>
<div class="t" style="left:585.500px;top:300.500px;font-size:13.500px;color:#55555f">Label:</div>
<div class="abs" style="left:1446px;top:311px;width:12px;height:3px;border:1px solid #222;background:#999"></div>
<div class="abs" style="left:443px;top:354px;width:1063px;height:30px;background:#959595;border-bottom:1px solid #858585"></div>
<div class="abs" style="left:443px;top:412px;width:1063px;height:1px;background:#858585"></div>
<div class="abs" style="left:440px;top:428px;width:1067px;height:84px;background:repeating-linear-gradient(90deg,#757575 0,#757575 1px,transparent 1px,transparent 2px) 0 0/100% 1px no-repeat,repeating-linear-gradient(90deg,#757575 0,#757575 1px,transparent 1px,transparent 2px) 0 100%/100% 1px no-repeat,repeating-linear-gradient(0deg,#757575 0,#757575 1px,transparent 1px,transparent 2px) 0 0/1px 100% no-repeat,repeating-linear-gradient(0deg,#757575 0,#757575 1px,transparent 1px,transparent 2px) 100% 0/1px 100% no-repeat,repeating-linear-gradient(156.7deg,#8e929f 0,#8e929f .9px,#9c9c9c 1.820px,#9c9c9c 2.720px,#8e929f 3.640px) fixed;"></div>
<div class="t" style="left:441px;top:429px;height:12px;padding:1px 3px 0 2px;background:#999;font-size:9px;line-height:11px;color:#1c1c1c;letter-spacing:.1px">Paginator</div>
<div class="abs" style="left:1200px;top:460px;width:111px;height:23px;border:1px solid #858585;border-radius:4px"></div>
<div class="abs" style="left:1294px;top:470px;width:0;height:0;border-left:4px solid transparent;border-right:4px solid transparent;border-top:4px solid #555"></div>
<div class="t" style="left:1344px;top:464.500px;font-size:11.500px;color:#58545e">1 – 3 of 3</div>
<svg class="abs" style="left:1436px;top:464px" width="8" height="14" viewBox="0 0 8 14"><path d="M7 1L1.500 7 7 13" fill="none" stroke="#6c6c6c" stroke-width="1.700"/></svg>
<svg class="abs" style="left:1474px;top:464px" width="8" height="14" viewBox="0 0 8 14"><path d="M1 1l5.500 6L1 13" fill="none" stroke="#6c6c6c" stroke-width="1.700"/></svg>
<div class="abs" style="left:1430px;top:124px;width:80px;height:34px;background:#2b3180;border-radius:4px;box-shadow:0 1px 3px rgba(0,0,0,.4)"></div>
<svg class="abs" style="left:1447px;top:132px" width="17" height="17" viewBox="0 0 17 17"><circle cx="8.500" cy="8.500" r="7" fill="none" stroke="#b9bbd2" stroke-width="1.500"/><path d="M8.500 5v7M5 8.500h7" stroke="#b9bbd2" stroke-width="1.500"/></svg>
<div class="t" style="left:1471px;top:134px;font-size:13px;font-weight:700;color:#b9bbd2">Add</div>
<div class="abs" style="left:1566px;top:64px;width:19px;height:521px;background:#999"></div>
<div class="abs" style="left:1567px;top:86px;width:17px;height:471px;background:#767676"></div>
<div class="abs" style="left:1570px;top:74px;width:0;height:0;border-left:5px solid transparent;border-right:5px solid transparent;border-bottom:5px solid #555"></div>
<div class="abs" style="left:1570px;top:571px;width:0;height:0;border-left:5px solid transparent;border-right:5px solid transparent;border-top:5px solid #333"></div>
<div class="abs" style="left:368px;top:585px;width:1217px;height:3px;background:#7d7d7d"></div>
<div class="abs" style="left:1585px;top:47px;width:6px;height:822px;background:#8a8a8a;border-left:1px solid #7f7f7f;border-right:1px solid #7f7f7f"></div>
<div class="abs" style="left:1591px;top:47px;width:327px;height:822px;background:#959595"></div>
<div class="abs" style="left:1918px;top:0;width:2px;height:869px;background:#4a4470"></div>
<div class="abs" style="left:1596px;top:53px;width:89px;height:26px;background:#959595;border:1px solid #7c7c7c;border-bottom:none;overflow:hidden"><svg class="abs" style="left:9px;top:3px" width="15" height="17.500" viewBox="0 0 14 16"><ellipse cx="7" cy="3" rx="6.500" ry="2.800" fill="#555"/><path d="M.5 5c0 3.500 13 3.500 13 0v2.500c0 3.500-13 3.500-13 0zM.5 9c0 3.500 13 3.500 13 0v2.500c0 3.500-13 3.500-13 0zM.5 13c0 3.500 13 3.500 13 0v0c0 4-13 4-13 0z" fill="#555"/></svg><span class="t" style="left:39px;top:7px;width:39px;overflow:hidden;height:18px;font-size:14px;color:#555;letter-spacing:-.45px">Models</span></div>
<div class="abs" style="left:1690px;top:53px;width:92px;height:26px;background:#959595;border:1px solid #7c7c7c;border-bottom:none;overflow:hidden"><svg class="abs" style="left:10px;top:5px" width="17" height="15" viewBox="0 0 17 15"><rect x="6" y="0" width="5" height="4.500" fill="#555"/><rect x="0" y="10" width="5" height="4.500" fill="#555"/><rect x="6" y="10" width="5" height="4.500" fill="#555"/><rect x="12" y="10" width="5" height="4.500" fill="#555"/><path d="M8.500 4v6M2.500 10V7.500h12V10" fill="none" stroke="#555" stroke-width="1.300"/></svg><span class="t" style="left:42px;top:7px;width:38px;overflow:hidden;height:18px;font-size:14px;color:#555;letter-spacing:-.45px">Outline</span></div>
<div class="abs" style="left:1787px;top:53px;width:131px;height:26px;background:#44728c;border:1px solid #44728c;border-bottom:none;overflow:hidden"><svg class="abs" style="left:9px;top:5px" width="18" height="14" viewBox="0 0 18 14"><path d="M0 1.500h18M0 5h18M0 8.500h18M0 12h18" stroke="#a4b8c6" stroke-width="2.200"/><path d="M3.500 0v14" stroke="#44728c" stroke-width="1"/></svg><span class="t" style="left:40px;top:7px;width:79px;overflow:hidden;height:18px;font-size:14px;color:#b4c2ca;letter-spacing:-.45px">PropertySheet</span></div>
<div class="abs" style="left:1591px;top:78px;width:327px;height:4px;background:#045c88"></div>
<div class="abs" style="left:1591px;top:82px;width:327px;height:30px;background:#858585"></div>
<div class="t" style="left:1601px;top:90px;font-size:13px;color:#161616">Label</div>
<svg class="abs" style="left:1898.500px;top:89.500px" width="10" height="13.500" viewBox="0 0 11 14"><path d="M1.500 4h8v8.500a1 1 0 0 1-1 1h-6a1 1 0 0 1-1-1z" fill="none" stroke="#0b6aa4" stroke-width="1.400"/><path d="M0 3h11M3.500 2.500V1h4v1.500" fill="none" stroke="#0b6aa4" stroke-width="1.400"/><path d="M4 5.500v6M7 5.500v6" stroke="#0b6aa4" stroke-width="1.200"/></svg>
<div class="abs" style="left:1591px;top:112px;width:327px;height:20px;background:#8b8b8b"><i style="position:absolute;left:8px;top:7px;width:0;height:0;border-left:4px solid transparent;border-right:4px solid transparent;border-top:6px solid #4a4a4a"></i><b class="t" style="left:25px;top:5px;font-size:11px;color:#111">Events &amp; Data</b></div>
<div class="t" style="right:251px;top:144px;font-size:11.400px;color:#161616">Data Mapping</div>
<div class="abs" style="left:1676px;top:140px;width:218px;height:20px;background:#959595;border:1px solid #767676;box-shadow:inset 0 1px 0 #8a8a8a"><span class="t" style="left:4px;top:3px;font-size:12px;color:#222"></span></div>
<div class="abs" style="left:1893px;top:140px;width:19px;height:20px;background:#959595;border:1px solid #767676"><svg width="12" height="12" viewBox="0 0 12 12" style="position:absolute;left:3px;top:3px"><circle cx="6" cy="6" r="3.300" fill="none" stroke="#111" stroke-width="2.400"/><circle cx="6" cy="6" r="4.800" fill="none" stroke="#111" stroke-width="2" stroke-dasharray="1.900 1.870" stroke-dashoffset=".9"/></svg></div>
<div class="t" style="right:251px;top:166px;font-size:11.400px;color:#161616">Text</div>
<div class="abs" style="left:1676px;top:162px;width:218px;height:20px;background:#959595;border:1px solid #767676;box-shadow:inset 0 1px 0 #8a8a8a"><span class="t" style="left:4px;top:3px;font-size:12px;color:#222">Label:</span></div>
<div class="abs" style="left:1893px;top:162px;width:19px;height:20px;background:#959595;border:1px solid #767676"><svg width="12" height="12" viewBox="0 0 12 12" style="position:absolute;left:3px;top:3px"><circle cx="6" cy="6" r="3.300" fill="none" stroke="#111" stroke-width="2.400"/><circle cx="6" cy="6" r="4.800" fill="none" stroke="#111" stroke-width="2" stroke-dasharray="1.900 1.870" stroke-dashoffset=".9"/></svg></div>
<div class="t" style="right:251px;top:189px;font-size:11.400px;color:#161616">Id</div>
<div class="abs" style="left:1676px;top:185px;width:236px;height:20px;background:#959595;border:1px solid #767676;box-shadow:inset 0 1px 0 #8a8a8a"><span class="t" style="left:4px;top:3px;font-size:12px;color:#222">label.1</span></div>
<div class="abs" style="left:1591px;top:215px;width:327px;height:20px;background:#8b8b8b"><i style="position:absolute;left:8px;top:7px;width:0;height:0;border-left:4px solid transparent;border-right:4px solid transparent;border-top:6px solid #4a4a4a"></i><b class="t" style="left:25px;top:5px;font-size:11px;color:#111">Table Actions</b></div>
<div class="t" style="left:1599px;top:247px;font-size:11.400px;color:#161616">Is Inside Table</div>
<div class="abs" style="left:1678px;top:245px;width:15px;height:15px;border:1px solid #5e5e5e;border-radius:2px;background:#989898"></div>
<div class="t" style="right:250px;top:267px;font-size:11.400px;color:#161616">Show Control</div>
<div class="abs" style="left:1678px;top:263px;width:234px;height:20px;background:#959595;border:1px solid #767676"><span class="t" style="left:4px;top:3px;font-size:12px;color:#161616">None</span><i style="position:absolute;right:4px;top:9px;width:0;height:0;border-left:3px solid transparent;border-right:3px solid transparent;border-top:3.500px solid #222"></i></div>
<div class="abs" style="left:1591px;top:293px;width:327px;height:20px;background:#8b8b8b"><i style="position:absolute;left:8px;top:7px;width:0;height:0;border-left:4px solid transparent;border-right:4px solid transparent;border-top:6px solid #4a4a4a"></i><b class="t" style="left:25px;top:5px;font-size:11px;color:#111">Display Logic</b></div>
<div class="t" style="right:223px;top:325px;font-size:11.400px;color:#161616">Is Visible</div>
<div class="abs" style="left:1705px;top:321px;width:189px;height:20px;background:#959595;border:1px solid #767676;box-shadow:inset 0 1px 0 #8a8a8a"><span class="t" style="left:4px;top:3px;font-size:12px;color:#222"></span></div>
<div class="abs" style="left:1893px;top:321px;width:19px;height:20px;background:#959595;border:1px solid #767676"><svg width="12" height="12" viewBox="0 0 12 12" style="position:absolute;left:3px;top:3px"><circle cx="6" cy="6" r="3.300" fill="none" stroke="#111" stroke-width="2.400"/><circle cx="6" cy="6" r="4.800" fill="none" stroke="#111" stroke-width="2" stroke-dasharray="1.900 1.870" stroke-dashoffset=".9"/></svg></div>
<div class="t" style="right:223px;top:348px;font-size:11.400px;color:#161616">Display If</div>
<div class="abs" style="left:1705px;top:344px;width:189px;height:19px;background:#959595;border:1px solid #767676;box-shadow:inset 0 1px 0 #8a8a8a"><span class="t" style="left:4px;top:2px;font-size:12px;color:#222"></span></div>
<div class="abs" style="left:1893px;top:344px;width:19px;height:19px;background:#959595;border:1px solid #767676"><svg width="12" height="12" viewBox="0 0 12 12" style="position:absolute;left:3px;top:3px"><circle cx="6" cy="6" r="3.300" fill="none" stroke="#111" stroke-width="2.400"/><circle cx="6" cy="6" r="4.800" fill="none" stroke="#111" stroke-width="2" stroke-dasharray="1.900 1.870" stroke-dashoffset=".9"/></svg></div>
<div class="t" style="right:223px;top:370px;font-size:11.400px;color:#161616">Tooltip</div>
<div class="abs" style="left:1705px;top:366px;width:189px;height:20px;background:#959595;border:1px solid #767676;box-shadow:inset 0 1px 0 #8a8a8a"><span class="t" style="left:4px;top:3px;font-size:12px;color:#222"></span></div>
<div class="abs" style="left:1893px;top:366px;width:19px;height:20px;background:#959595;border:1px solid #767676"><svg width="12" height="12" viewBox="0 0 12 12" style="position:absolute;left:3px;top:3px"><circle cx="6" cy="6" r="3.300" fill="none" stroke="#111" stroke-width="2.400"/><circle cx="6" cy="6" r="4.800" fill="none" stroke="#111" stroke-width="2" stroke-dasharray="1.900 1.870" stroke-dashoffset=".9"/></svg></div>
<div class="t" style="right:223px;top:393px;font-size:11.400px;color:#161616">Text Wrap</div>
<div class="abs" style="left:1705px;top:389px;width:207px;height:19px;background:#959595;border:1px solid #767676"><span class="t" style="left:4px;top:2px;font-size:12px;color:#161616"></span><i style="position:absolute;right:4px;top:8px;width:0;height:0;border-left:3px solid transparent;border-right:3px solid transparent;border-top:3.500px solid #222"></i></div>
<div class="t" style="right:223px;top:415px;font-size:11.400px;color:#161616">Text Transformation</div>
<div class="abs" style="left:1705px;top:411px;width:207px;height:19px;background:#959595;border:1px solid #767676"><span class="t" style="left:4px;top:2px;font-size:12px;color:#161616">Default</span><i style="position:absolute;right:4px;top:8px;width:0;height:0;border-left:3px solid transparent;border-right:3px solid transparent;border-top:3.500px solid #222"></i></div>
<div class="t" style="right:223px;top:438px;font-size:11.400px;color:#161616">Dropdown Type</div>
<div class="abs" style="left:1705px;top:434px;width:207px;height:19px;background:#959595;border:1px solid #767676"><span class="t" style="left:4px;top:2px;font-size:12px;color:#161616">Default</span><i style="position:absolute;right:4px;top:8px;width:0;height:0;border-left:3px solid transparent;border-right:3px solid transparent;border-top:3.500px solid #222"></i></div>
<div class="abs" style="left:1591px;top:464px;width:327px;height:20px;background:#8b8b8b"><i style="position:absolute;left:8px;top:7px;width:0;height:0;border-left:4px solid transparent;border-right:4px solid transparent;border-top:6px solid #4a4a4a"></i><b class="t" style="left:25px;top:5px;font-size:11px;color:#111">Styling Overrides</b></div>
<div class="t" style="left:1599px;top:496px;font-size:11.400px;color:#161616">Class</div>
<div class="abs" style="left:1634px;top:492px;width:278px;height:28px;background:#959595;border:1px solid #767676"><span class="t" style="left:5px;top:6px;font-size:13px;color:#565656">Select class...</span></div>
<div class="abs" style="left:1591px;top:537px;width:327px;height:20px;background:#8b8b8b"><i style="position:absolute;left:8px;top:7px;width:0;height:0;border-left:4px solid transparent;border-right:4px solid transparent;border-top:6px solid #4a4a4a"></i><b class="t" style="left:25px;top:5px;font-size:11px;color:#111">Dynamic Properties</b></div>
<svg class="abs" style="left:1600px;top:567px" width="14" height="14" viewBox="0 0 14 14"><path d="M7 .5v13M.5 7h13" stroke="#0c0c0c" stroke-width="3"/></svg>
<div class="t" style="left:1620px;top:567px;font-size:14px;color:#161616;transform:scaleX(.89);transform-origin:0 0">Add New Property</div>
<div class="abs" style="left:368px;top:588px;width:1217px;height:281px;background:#959595"></div>
<div class="abs" style="left:372px;top:592px;width:106px;height:26px;background:#44728c;border:1px solid #44728c;border-bottom:none;overflow:hidden"><svg class="abs" style="left:10px;top:6.500px" width="18" height="13" viewBox="0 0 18 13"><path d="M5 2L1.200 6.500 5 11M13 2l3.800 4.500L13 11M10.500 .5L7.500 12.500" fill="none" stroke="#b4c2ca" stroke-width="1.500"/></svg><span class="t" style="left:43px;top:7px;font-size:14px;color:#b4c2ca;letter-spacing:-.45px">Template</span></div>
<div class="abs" style="left:484px;top:592px;width:117px;height:26px;background:#959595;border:1px solid #7c7c7c;border-bottom:none;overflow:hidden"><svg class="abs" style="left:10px;top:5px" width="15" height="15" viewBox="0 0 15 15"><circle cx="7.500" cy="7.500" r="4.200" fill="none" stroke="#555" stroke-width="2.800"/><circle cx="7.500" cy="7.500" r="6.100" fill="none" stroke="#555" stroke-width="2.400" stroke-dasharray="2.400 2.390" stroke-dashoffset="1.200"/></svg><span class="t" style="left:38px;top:7px;font-size:14px;color:#555;letter-spacing:-.45px">Component</span></div>
<div class="abs" style="left:607px;top:592px;width:110px;height:26px;background:#959595;border:1px solid #7c7c7c;border-bottom:none;overflow:hidden"><svg class="abs" style="left:10px;top:5px" width="16" height="15" viewBox="0 0 16 15"><rect x=".7" y=".7" width="14.600" height="13.600" rx="1.500" fill="none" stroke="#555" stroke-width="1.400"/><circle cx="5" cy="5" r="1.800" fill="#555"/><path d="M2 13l4-5 3 3 2-2 3 4z" fill="#555"/></svg><span class="t" style="left:38px;top:7px;font-size:14px;color:#555;letter-spacing:-.45px"></span></div>
<div class="abs" style="left:1427px;top:592px;width:155px;height:26px;background:#959595;border:1px solid #7c7c7c;border-bottom:none;overflow:hidden"><svg class="abs" style="left:9px;top:4px" width="10" height="16" viewBox="0 0 10 16"><path d="M3 0h4L5.500 5.500H9L3.500 16l1.300-7.500H1z" fill="#555"/></svg><span class="t" style="left:36px;top:7px;font-size:14px;color:#555;letter-spacing:-.45px">Live Preview Logs</span></div>
<div class="abs" style="left:368px;top:618px;width:1217px;height:4px;background:#045c88"></div>
<div class="abs" style="left:368px;top:622px;width:1217px;height:247px;background:#999;overflow:hidden" id="ed">
<div class="abs" style="left:55px;top:0;width:1px;height:249px;background:#8b8b8b"></div>
<div class="abs" style="left:83px;top:0;width:1px;height:249px;background:#8b8b8b"></div>
<div class="abs" style="left:112px;top:0;width:1px;height:249px;background:#8b8b8b"></div>
<div class="abs" style="left:141px;top:0;width:1px;height:249px;background:#8b8b8b"></div>
<div class="abs" style="left:170px;top:0;width:1px;height:249px;background:#8b8b8b"></div>
<div class="t" style="left:0;top:-8.8px;width:36px;text-align:right;font-family:'Liberation Mono',monospace;font-size:12px;line-height:18px;color:#2a6982">13</div>
<div class="t" style="left:199.0px;top:-8.8px;font-family:'Liberation Mono',monospace;font-size:12px;line-height:18px;white-space:pre"><span style="color:#4a4a4a">&lt;</span><span style="color:#7a1f1f">mat-row</span> <span style="color:#1c1c1c">*</span><span style="color:#b01818">matRowDef</span><span style="color:#1c1c1c">=</span><span style="color:#1a1a9a">&quot;let row; columns: displayedColumns&quot;</span> <span style="color:#1c1c1c">[</span><span style="color:#b01818">ngClass</span><span style="color:#1c1c1c">]</span><span style="color:#1c1c1c">=</span><span style="color:#1a1a9a">&quot;{&#x27;table-selected&#x27;: mg.isRowSelected(row)}&quot;</span> <span style="color:#1c1c1c">[</span><span style="color:#b01818">magicRow</span><span style="color:#1c1c1c">]</span><span style="color:#1c1c1c">=</span><span style="color:#1a1a9a">&quot;row?.rowId&quot;</span> <span style="color:#1c1c1c">(</span><span style="color:#b01818">click</span><span style="color:#1c1c1c">)</span><span style="color:#1c1c1c">=</span><span style="color:#1a1a9a">&quot;mg.onRowClick(row)&quot;</span><span style="color:#4a4a4a">&gt;</span></div>
<div class="t" style="left:0;top:9.0px;width:36px;text-align:right;font-family:'Liberation Mono',monospace;font-size:12px;line-height:18px;color:#2a6982">14</div>
<div class="t" style="left:199.0px;top:9.0px;font-family:'Liberation Mono',monospace;font-size:12px;line-height:18px;white-space:pre"><span style="color:#4a4a4a">&lt;</span><span style="color:#7a1f1f">ng-container</span> <span style="color:#1c1c1c">[</span><span style="color:#b01818">magic</span><span style="color:#1c1c1c">]</span><span style="color:#1c1c1c">=</span><span style="color:#1a1a9a">&quot;mgc.ColumnType&quot;</span> <span style="color:#1c1c1c">[</span><span style="color:#b01818">matColumnDef</span><span style="color:#1c1c1c">]</span><span style="color:#1c1c1c">=</span><span style="color:#1a1a9a">&quot;mgc.ColumnType&quot;</span><span style="color:#4a4a4a">&gt;</span></div>
<div class="t" style="left:0;top:26.8px;width:36px;text-align:right;font-family:'Liberation Mono',monospace;font-size:12px;line-height:18px;color:#2a6982">15</div>
<div class="t" style="left:227.8px;top:26.8px;font-family:'Liberation Mono',monospace;font-size:12px;line-height:18px;white-space:pre"><span style="color:#4a4a4a">&lt;</span><span style="color:#7a1f1f">mat-header-cell</span> <span style="color:#1c1c1c">*</span><span style="color:#b01818">matHeaderCellDef</span> <span style="color:#b01818">class</span><span style="color:#1c1c1c">=</span><span style="color:#1a1a9a">&quot;text-center&quot;</span> <span style="color:#b01818">data-comp-id</span><span style="color:#1c1c1c">=</span><span style="color:#1a1a9a">&quot;table-header-cell.1&quot;</span><span style="color:#4a4a4a">&gt;</span></div>
<div class="t" style="left:0;top:44.5px;width:36px;text-align:right;font-family:'Liberation Mono',monospace;font-size:12px;line-height:18px;color:#2a6982">16</div>
<div class="t" style="left:256.6px;top:44.5px;font-family:'Liberation Mono',monospace;font-size:12px;line-height:18px;white-space:pre"><span style="color:#1c1c1c">{{ mg.getText(mgc.ColumnType) }}</span></div>
<div class="t" style="left:0;top:62.3px;width:36px;text-align:right;font-family:'Liberation Mono',monospace;font-size:12px;line-height:18px;color:#2a6982">17</div>
<div class="t" style="left:227.8px;top:62.3px;font-family:'Liberation Mono',monospace;font-size:12px;line-height:18px;white-space:pre"><span style="color:#4a4a4a">&lt;/</span><span style="color:#7a1f1f">mat-header-cell</span><span style="color:#4a4a4a">&gt;</span></div>
<div class="t" style="left:0;top:80.1px;width:36px;text-align:right;font-family:'Liberation Mono',monospace;font-size:12px;line-height:18px;color:#2a6982">18</div>
<div class="t" style="left:227.8px;top:80.1px;font-family:'Liberation Mono',monospace;font-size:12px;line-height:18px;white-space:pre"><span style="color:#4a4a4a">&lt;</span><span style="color:#7a1f1f">mat-cell</span> <span style="color:#1c1c1c">*</span><span style="color:#b01818">matCellDef</span><span style="color:#1c1c1c">=</span><span style="color:#1a1a9a">&quot;let row&quot;</span> <span style="color:#b01818">magicMark</span><span style="color:#1c1c1c">=</span><span style="color:#1a1a9a">&quot;magicTableRowContainer&quot;</span> <span style="color:#b01818">class</span><span style="color:#1c1c1c">=</span><span style="color:#1a1a9a">&quot;text-center&quot;</span> <span style="color:#b01818">data-comp-id</span><span style="color:#1c1c1c">=</span><span style="color:#1a1a9a">&quot;column-cell.1&quot;</span><span style="color:#4a4a4a">&gt;</span></div>
<div class="t" style="left:0;top:97.8px;width:36px;text-align:right;font-family:'Liberation Mono',monospace;font-size:12px;line-height:18px;color:#2a6982">19</div>
<div class="t" style="left:256.6px;top:97.8px;font-family:'Liberation Mono',monospace;font-size:12px;line-height:18px;white-space:pre"><span style="color:#4a4a4a">&lt;</span><span style="color:#7a1f1f">c-container</span> <span style="color:#1c1c1c">#</span><span style="color:#b01818">matCell</span> <span style="color:#1c1c1c">[</span><span style="color:#b01818">formGroup</span><span style="color:#1c1c1c">]</span><span style="color:#1c1c1c">=</span><span style="color:#1a1a9a">&quot;mg.getFormGroupByRow(row.rowId)&quot;</span> <span style="color:#1c1c1c">*</span><span style="color:#b01818">ngIf</span><span style="color:#1c1c1c">=</span><span style="color:#1a1a9a">&quot;mg.ifRowCreated(row)&quot;</span> <span style="color:#b01818">data-comp-id</span><span style="color:#1c1c1c">=</span><span style="color:#1a1a9a">&quot;c-container.2&quot;</span><span style="color:#4a4a4a">&gt;</span></div>
<div class="t" style="left:0;top:115.6px;width:36px;text-align:right;font-family:'Liberation Mono',monospace;font-size:12px;line-height:18px;color:#2a6982">20</div>
<div class="t" style="left:285.4px;top:115.6px;font-family:'Liberation Mono',monospace;font-size:12px;line-height:18px;white-space:pre"><span style="color:#4a4a4a">&lt;</span><span style="color:#7a1f1f">mat-form-field</span> <span style="color:#b01818">appearance</span><span style="color:#1c1c1c">=</span><span style="color:#1a1a9a">&quot;outline&quot;</span> <span style="color:#b01818">data-comp-id</span><span style="color:#1c1c1c">=</span><span style="color:#1a1a9a">&quot;mat-select-input.1&quot;</span> <span style="color:#1c1c1c">*</span><span style="color:#b01818">ngIf</span><span style="color:#1c1c1c">=</span><span style="color:#1a1a9a">&quot;mg.isRowInRowEditing(row)&quot;</span><span style="color:#4a4a4a">&gt;</span></div>
<div class="t" style="left:0;top:133.4px;width:36px;text-align:right;font-family:'Liberation Mono',monospace;font-size:12px;line-height:18px;color:#2a6982">21</div>
<div class="t" style="left:314.2px;top:133.4px;font-family:'Liberation Mono',monospace;font-size:12px;line-height:18px;white-space:pre"><span style="color:#4a4a4a">&lt;</span><span style="color:#7a1f1f">mat-select</span> <span style="color:#1c1c1c">[</span><span style="color:#b01818">magic</span><span style="color:#1c1c1c">]</span><span style="color:#1c1c1c">=</span><span style="color:#1a1a9a">&quot;mgc.ComboContactType&quot;</span> <span style="color:#1c1c1c">[</span><span style="color:#b01818">formControlName</span><span style="color:#1c1c1c">]</span><span style="color:#1c1c1c">=</span><span style="color:#1a1a9a">&quot;mgc.ComboContactType&quot;</span> <span style="color:#1c1c1c">[</span><span style="color:#b01818">rowId</span><span style="color:#1c1c1c">]</span><span style="color:#1c1c1c">=</span><span style="color:#1a1a9a">&quot;row.rowId&quot;</span><span style="color:#4a4a4a">&gt;</span></div>
<div class="t" style="left:0;top:151.2px;width:36px;text-align:right;font-family:'Liberation Mono',monospace;font-size:12px;line-height:18px;color:#2a6982">22</div>
<div class="t" style="left:343.0px;top:151.2px;font-family:'Liberation Mono',monospace;font-size:12px;line-height:18px;white-space:pre"><span style="color:#4a4a4a">&lt;</span><span style="color:#7a1f1f">mat-option</span> <span style="color:#1c1c1c">[</span><span style="color:#b01818">value</span><span style="color:#1c1c1c">]</span><span style="color:#1c1c1c">=</span><span style="color:#1a1a9a">&quot;item.index&quot;</span> <span style="color:#1c1c1c">*</span><span style="color:#b01818">ngFor</span><span style="color:#1c1c1c">=</span><span style="color:#1a1a9a">&quot;let item of mg.getItemListValues(mgc.ComboContactType, row.rowId)&quot;</span><span style="color:#4a4a4a">&gt;</span><span style="color:#1c1c1c">{{ item.displayValue }}</span></div>
<div class="t" style="left:0;top:168.9px;width:36px;text-align:right;font-family:'Liberation Mono',monospace;font-size:12px;line-height:18px;color:#2a6982">23</div>
<div class="t" style="left:314.2px;top:168.9px;font-family:'Liberation Mono',monospace;font-size:12px;line-height:18px;white-space:pre"><span style="color:#4a4a4a">&lt;/</span><span style="color:#7a1f1f">mat-select</span><span style="color:#4a4a4a">&gt;</span></div>
<div class="t" style="left:0;top:186.7px;width:36px;text-align:right;font-family:'Liberation Mono',monospace;font-size:12px;line-height:18px;color:#2a6982">24</div>
<div class="t" style="left:285.4px;top:186.7px;font-family:'Liberation Mono',monospace;font-size:12px;line-height:18px;white-space:pre"><span style="color:#4a4a4a">&lt;/</span><span style="color:#7a1f1f">mat-form-field</span><span style="color:#4a4a4a">&gt;</span></div>
<div class="t" style="left:0;top:204.5px;width:36px;text-align:right;font-family:'Liberation Mono',monospace;font-size:12px;line-height:18px;color:#2a6982">25</div>
<div class="t" style="left:285.4px;top:204.5px;font-family:'Liberation Mono',monospace;font-size:12px;line-height:18px;white-space:pre"><span style="background:#8a919c"><span style="color:#4a4a4a">&lt;</span><span style="color:#7a1f1f">label</span> <span style="color:#b01818">data-comp-id</span><span style="color:#1c1c1c">=</span><span style="color:#1a1a9a">&quot;label.1&quot;</span> <span style="color:#b01818">id</span><span style="color:#1c1c1c">=</span><span style="color:#1a1a9a">&quot;label.1&quot;</span><span style="color:#4a4a4a">&gt;</span></span><span style="color:#1c1c1c">Label:</span></div>
<div class="t" style="left:0;top:222.2px;width:36px;text-align:right;font-family:'Liberation Mono',monospace;font-size:12px;line-height:18px;color:#2a6982">26</div>
<div class="t" style="left:285.4px;top:222.2px;font-family:'Liberation Mono',monospace;font-size:12px;line-height:18px;white-space:pre"><span style="color:#4a4a4a">&lt;/</span><span style="color:#7a1f1f">label</span><span style="color:#4a4a4a">&gt;</span></div>
<div class="t" style="left:0;top:240.0px;width:36px;text-align:right;font-family:'Liberation Mono',monospace;font-size:12px;line-height:18px;color:#2a6982">27</div>
<div class="t" style="left:256.6px;top:240.0px;font-family:'Liberation Mono',monospace;font-size:12px;line-height:18px;white-space:pre"><span style="color:#4a4a4a">&lt;/</span><span style="color:#7a1f1f">c-container</span><span style="color:#4a4a4a">&gt;</span></div>
<div class="abs" style="left:198px;top:26.8px;width:1px;height:248.8px;background:#8b8b8b"></div>
<div class="abs" style="left:227px;top:44.5px;width:1px;height:17.8px;background:#8b8b8b"></div>
<div class="abs" style="left:227px;top:97.8px;width:1px;height:177.7px;background:#8b8b8b"></div>
<div class="abs" style="left:256px;top:115.6px;width:1px;height:124.4px;background:#8b8b8b"></div>
<div class="abs" style="left:285px;top:133.4px;width:1px;height:53.3px;background:#8b8b8b"></div>
<div class="abs" style="left:314px;top:151.2px;width:1px;height:17.8px;background:#8b8b8b"></div>
</div>
<div class="abs" style="left:1580px;top:660px;width:5px;height:40px;background:#7a7a7a"></div>
<div class="abs" style="left:423px;top:864px;width:831px;height:4px;background:#868686"></div>
<div class="abs" style="left:0;top:867px;width:1920px;height:1px;background:linear-gradient(90deg,#b05070 0,#a8609a 25%,#9a62a0 60%,#7a5aa0 100%);opacity:.5"></div>
<div class="abs" style="left:0;top:868px;width:1920px;height:1px;background:linear-gradient(90deg,#b05070 0,#a8609a 25%,#9a62a0 60%,#7a5aa0 100%)"></div>
<div class="abs" style="left:624px;top:70px;width:672px;height:574px;background:#f1f1f1;box-shadow:0 2px 7px rgba(0,0,0,.38);overflow:hidden">
<div class="abs" style="left:0;top:0;width:671px;height:46px;background:#1a97cd"></div>
<div class="t" style="left:20px;top:16px;font-size:13px;font-weight:700;color:#fff">Select Data Model</div>
<div class="abs" style="left:19px;top:60px;width:431px;height:31px;background:#fff;border:1px solid #d5d8e0;border-radius:4px"><span class="t" style="left:11px;top:9px;font-size:11px;color:#9c9c9c;letter-spacing:.1px">Search Control Name...</span></div>
<div class="abs" style="left:463px;top:60px;width:190px;height:31px;background:#fff;border:1px solid #d5d8e0;border-radius:4px"><span class="t" style="left:11px;top:9.500px;font-size:11px;color:#555">Select Control</span><i style="position:absolute;right:5px;top:12.500px;width:0;height:0;border-left:5px solid transparent;border-right:5px solid transparent;border-top:5.500px solid #8c8f9c"></i></div>
<div class="abs" style="left:19px;top:105px;width:634px;height:408px;background:#fff;border:1px solid #dcdcdc;border-radius:5px"></div>
<div class="abs" style="left:29px;top:115px;width:614px;height:30px;background:#dedede"></div>
<div class="abs" style="left:37px;top:127px;width:0;height:0;border-left:4px solid transparent;border-right:4px solid transparent;border-top:6px solid #111"></div>
<svg class="abs" style="left:53.500px;top:124.500px" width="14" height="11.500" viewBox="0 0 15.500 13"><path d="M0 5.600V1a1 1 0 0 1 1-1h4.600a1.400 1.400 0 0 1 1 .4l5 5a1.200 1.200 0 0 1 0 1.700l-4.500 4.500a1.200 1.200 0 0 1-1.700 0l-5-5A1.400 1.400 0 0 1 0 5.600zM2.800 1.700a1.100 1.100 0 1 0 0 2.200 1.100 1.100 0 0 0 0-2.200z" fill="#111" fill-rule="evenodd"/><path d="M7.800 0l5.600 5.600a1.200 1.200 0 0 1 0 1.700l-4.800 4.800.7.500a1 1 0 0 0 1.300-.1l4-4.300a1.300 1.300 0 0 0 0-1.800L8.800.4a1.400 1.400 0 0 0-1-.4z" fill="#111"/></svg>
<div class="t" style="left:76px;top:123px;font-size:13px;color:#1e1e1e">MContact</div>
<div class="abs" style="left:46px;top:265px;width:597px;height:30px;background:#efefef"></div>
<svg class="abs" style="left:71px;top:153.0px" width="10" height="13" viewBox="0 0 10 13"><path d="M0 0h6v4h4v9H0z" fill="#7a7a7a"/><path d="M6.800 0L10 3.200H6.800z" fill="#7a7a7a"/></svg>
<div class="t" style="left:90px;top:153.0px;font-size:13px;color:#1e1e1e;">MContact <span style="font-size:11px;color:#777;font-weight:400;margin-left:0">Form</span></div>
<svg class="abs" style="left:614px;top:153.0px" width="12" height="12" viewBox="0 0 12 12"><path d="M5.200 6.800a2.600 2.600 0 0 1 0-3.700l1.800-1.800a2.600 2.600 0 0 1 3.700 3.700l-.9.900M6.800 5.200a2.600 2.600 0 0 1 0 3.700l-1.800 1.800a2.600 2.600 0 0 1-3.700-3.700l.9-.9" fill="none" stroke="#3cae1c" stroke-width="2.100" stroke-linecap="round"/></svg>
<svg class="abs" style="left:70px;top:183.5px" width="13" height="13" viewBox="0 0 13 13"><path d="M0 5.600V1a1 1 0 0 1 1-1h4.600a1.400 1.400 0 0 1 1 .4l5 5a1.200 1.200 0 0 1 0 1.700l-4.500 4.500a1.200 1.200 0 0 1-1.700 0l-5-5A1.400 1.400 0 0 1 0 5.600zM2.800 1.700a1.100 1.100 0 1 0 0 2.200 1.100 1.100 0 0 0 0-2.200z" fill="#7e7e7e" fill-rule="evenodd"/></svg>
<div class="t" style="left:90px;top:183.0px;font-size:13px;color:#1e1e1e;">btnCreate_Contact <span style="font-size:11px;color:#777;font-weight:400;margin-left:0">Button</span></div>
<svg class="abs" style="left:614px;top:183.0px" width="12" height="12" viewBox="0 0 12 12"><path d="M5.200 6.800a2.600 2.600 0 0 1 0-3.700l1.800-1.800a2.600 2.600 0 0 1 3.700 3.700l-.9.900M6.800 5.200a2.600 2.600 0 0 1 0 3.700l-1.800 1.800a2.600 2.600 0 0 1-3.700-3.700l.9-.9" fill="none" stroke="#3cae1c" stroke-width="2.100" stroke-linecap="round"/></svg>
<svg class="abs" style="left:70px;top:213.5px" width="13" height="13" viewBox="0 0 13 13"><path d="M0 5.600V1a1 1 0 0 1 1-1h4.600a1.400 1.400 0 0 1 1 .4l5 5a1.200 1.200 0 0 1 0 1.700l-4.500 4.500a1.200 1.200 0 0 1-1.700 0l-5-5A1.400 1.400 0 0 1 0 5.600zM2.800 1.700a1.100 1.100 0 1 0 0 2.200 1.100 1.100 0 0 0 0-2.200z" fill="#7e7e7e" fill-rule="evenodd"/></svg>
<div class="t" style="left:90px;top:213.0px;font-size:13px;color:#1e1e1e;">TableMContact <span style="font-size:11px;color:#777;font-weight:400;margin-left:0">Table</span></div>
<svg class="abs" style="left:614px;top:213.0px" width="12" height="12" viewBox="0 0 12 12"><path d="M5.200 6.800a2.600 2.600 0 0 1 0-3.700l1.800-1.800a2.600 2.600 0 0 1 3.700 3.700l-.9.900M6.800 5.200a2.600 2.600 0 0 1 0 3.700l-1.800 1.800a2.600 2.600 0 0 1-3.700-3.700l.9-.9" fill="none" stroke="#3cae1c" stroke-width="2.100" stroke-linecap="round"/></svg>
<svg class="abs" style="left:70px;top:243.5px" width="13" height="13" viewBox="0 0 13 13"><path d="M0 5.600V1a1 1 0 0 1 1-1h4.600a1.400 1.400 0 0 1 1 .4l5 5a1.200 1.200 0 0 1 0 1.700l-4.500 4.500a1.200 1.200 0 0 1-1.700 0l-5-5A1.400 1.400 0 0 1 0 5.600zM2.800 1.700a1.100 1.100 0 1 0 0 2.200 1.100 1.100 0 0 0 0-2.200z" fill="#7e7e7e" fill-rule="evenodd"/></svg>
<div class="t" style="left:90px;top:243.0px;font-size:13px;color:#1e1e1e;">ColumnType <span style="font-size:11px;color:#777;font-weight:400;margin-left:0">Column</span></div>
<svg class="abs" style="left:614px;top:243.0px" width="12" height="12" viewBox="0 0 12 12"><path d="M5.200 6.800a2.600 2.600 0 0 1 0-3.700l1.800-1.800a2.600 2.600 0 0 1 3.700 3.700l-.9.900M6.800 5.200a2.600 2.600 0 0 1 0 3.700l-1.800 1.800a2.600 2.600 0 0 1-3.700-3.700l.9-.9" fill="none" stroke="#3cae1c" stroke-width="2.100" stroke-linecap="round"/></svg>
<svg class="abs" style="left:70px;top:273.5px" width="13" height="13" viewBox="0 0 13 13"><path d="M0 5.600V1a1 1 0 0 1 1-1h4.600a1.400 1.400 0 0 1 1 .4l5 5a1.200 1.200 0 0 1 0 1.700l-4.500 4.500a1.200 1.200 0 0 1-1.700 0l-5-5A1.400 1.400 0 0 1 0 5.600zM2.800 1.700a1.100 1.100 0 1 0 0 2.200 1.100 1.100 0 0 0 0-2.200z" fill="#7e7e7e" fill-rule="evenodd"/></svg>
<div class="t" style="left:90px;top:273.0px;font-size:13px;color:#1e1e1e;font-weight:700;">ComboContactType <span style="font-size:11px;color:#777;font-weight:400;margin-left:0">ComboBox</span></div>
<svg class="abs" style="left:614px;top:273.0px" width="12" height="12" viewBox="0 0 12 12"><path d="M5.200 6.800a2.600 2.600 0 0 1 0-3.700l1.800-1.800a2.600 2.600 0 0 1 3.700 3.700l-.9.900M6.800 5.200a2.600 2.600 0 0 1 0 3.700l-1.800 1.800a2.600 2.600 0 0 1-3.700-3.700l.9-.9" fill="none" stroke="#3cae1c" stroke-width="2.100" stroke-linecap="round"/></svg>
<svg class="abs" style="left:70px;top:303.5px" width="13" height="13" viewBox="0 0 13 13"><path d="M0 5.600V1a1 1 0 0 1 1-1h4.600a1.400 1.400 0 0 1 1 .4l5 5a1.200 1.200 0 0 1 0 1.700l-4.500 4.500a1.200 1.200 0 0 1-1.700 0l-5-5A1.400 1.400 0 0 1 0 5.600zM2.800 1.700a1.100 1.100 0 1 0 0 2.200 1.100 1.100 0 0 0 0-2.200z" fill="#7e7e7e" fill-rule="evenodd"/></svg>
<div class="t" style="left:90px;top:303.0px;font-size:13px;color:#1e1e1e;">Column_Value <span style="font-size:11px;color:#777;font-weight:400;margin-left:0">Column</span></div>
<svg class="abs" style="left:614px;top:303.0px" width="12" height="12" viewBox="0 0 12 12"><path d="M5.200 6.800a2.600 2.600 0 0 1 0-3.700l1.800-1.800a2.600 2.600 0 0 1 3.700 3.700l-.9.900M6.800 5.200a2.600 2.600 0 0 1 0 3.700l-1.800 1.800a2.600 2.600 0 0 1-3.700-3.700l.9-.9" fill="none" stroke="#3cae1c" stroke-width="2.100" stroke-linecap="round"/></svg>
<svg class="abs" style="left:70px;top:333.5px" width="13" height="13" viewBox="0 0 13 13"><path d="M0 5.600V1a1 1 0 0 1 1-1h4.600a1.400 1.400 0 0 1 1 .4l5 5a1.200 1.200 0 0 1 0 1.700l-4.500 4.500a1.200 1.200 0 0 1-1.700 0l-5-5A1.400 1.400 0 0 1 0 5.600zM2.800 1.700a1.100 1.100 0 1 0 0 2.200 1.100 1.100 0 0 0 0-2.200z" fill="#7e7e7e" fill-rule="evenodd"/></svg>
<div class="t" style="left:90px;top:333.0px;font-size:13px;color:#1e1e1e;">Contact_Inforrmation_Value <span style="font-size:11px;color:#777;font-weight:400;margin-left:0">Edit</span></div>
<svg class="abs" style="left:614px;top:333.0px" width="12" height="12" viewBox="0 0 12 12"><path d="M5.200 6.800a2.600 2.600 0 0 1 0-3.700l1.800-1.800a2.600 2.600 0 0 1 3.700 3.700l-.9.900M6.800 5.200a2.600 2.600 0 0 1 0 3.700l-1.800 1.800a2.600 2.600 0 0 1-3.700-3.700l.9-.9" fill="none" stroke="#3cae1c" stroke-width="2.100" stroke-linecap="round"/></svg>
<svg class="abs" style="left:70px;top:363.5px" width="13" height="13" viewBox="0 0 13 13"><path d="M0 5.600V1a1 1 0 0 1 1-1h4.600a1.400 1.400 0 0 1 1 .4l5 5a1.200 1.200 0 0 1 0 1.700l-4.500 4.500a1.200 1.200 0 0 1-1.700 0l-5-5A1.400 1.400 0 0 1 0 5.600zM2.800 1.700a1.100 1.100 0 1 0 0 2.200 1.100 1.100 0 0 0 0-2.200z" fill="#7e7e7e" fill-rule="evenodd"/></svg>
<div class="t" style="left:90px;top:363.0px;font-size:13px;color:#1e1e1e;">Column_isPrimary <span style="font-size:11px;color:#777;font-weight:400;margin-left:0">Column</span></div>
<svg class="abs" style="left:614px;top:363.0px" width="12" height="12" viewBox="0 0 12 12"><path d="M5.200 6.800a2.600 2.600 0 0 1 0-3.700l1.800-1.800a2.600 2.600 0 0 1 3.700 3.700l-.9.900M6.800 5.200a2.600 2.600 0 0 1 0 3.700l-1.800 1.800a2.600 2.600 0 0 1-3.700-3.700l.9-.9" fill="none" stroke="#3cae1c" stroke-width="2.100" stroke-linecap="round"/></svg>
<svg class="abs" style="left:70px;top:393.5px" width="13" height="13" viewBox="0 0 13 13"><path d="M0 5.600V1a1 1 0 0 1 1-1h4.600a1.400 1.400 0 0 1 1 .4l5 5a1.200 1.200 0 0 1 0 1.700l-4.500 4.500a1.200 1.200 0 0 1-1.700 0l-5-5A1.400 1.400 0 0 1 0 5.600zM2.800 1.700a1.100 1.100 0 1 0 0 2.200 1.100 1.100 0 0 0 0-2.200z" fill="#7e7e7e" fill-rule="evenodd"/></svg>
<div class="t" style="left:90px;top:393.0px;font-size:13px;color:#1e1e1e;">CheckBox_isPrimary <span style="font-size:11px;color:#777;font-weight:400;margin-left:0">CheckBox</span></div>
<svg class="abs" style="left:614px;top:393.0px" width="12" height="12" viewBox="0 0 12 12"><path d="M5.200 6.800a2.600 2.600 0 0 1 0-3.700l1.800-1.800a2.600 2.600 0 0 1 3.700 3.700l-.9.900M6.800 5.200a2.600 2.600 0 0 1 0 3.700l-1.800 1.800a2.600 2.600 0 0 1-3.700-3.700l.9-.9" fill="none" stroke="#3cae1c" stroke-width="2.100" stroke-linecap="round"/></svg>
<svg class="abs" style="left:70px;top:423.5px" width="13" height="13" viewBox="0 0 13 13"><path d="M0 5.600V1a1 1 0 0 1 1-1h4.600a1.400 1.400 0 0 1 1 .4l5 5a1.200 1.200 0 0 1 0 1.700l-4.500 4.500a1.200 1.200 0 0 1-1.700 0l-5-5A1.400 1.400 0 0 1 0 5.600zM2.800 1.700a1.100 1.100 0 1 0 0 2.200 1.100 1.100 0 0 0 0-2.200z" fill="#7e7e7e" fill-rule="evenodd"/></svg>
<div class="t" style="left:90px;top:423.0px;font-size:13px;color:#1e1e1e;">ColumnAction <span style="font-size:11px;color:#777;font-weight:400;margin-left:0">Column</span></div>
<svg class="abs" style="left:614px;top:423.0px" width="12" height="12" viewBox="0 0 12 12"><path d="M5.200 6.800a2.600 2.600 0 0 1 0-3.700l1.800-1.800a2.600 2.600 0 0 1 3.700 3.700l-.9.900M6.800 5.200a2.600 2.600 0 0 1 0 3.700l-1.800 1.800a2.600 2.600 0 0 1-3.700-3.700l.9-.9" fill="none" stroke="#3cae1c" stroke-width="2.100" stroke-linecap="round"/></svg>
<svg class="abs" style="left:70px;top:453.5px" width="13" height="13" viewBox="0 0 13 13"><path d="M0 5.600V1a1 1 0 0 1 1-1h4.600a1.400 1.400 0 0 1 1 .4l5 5a1.200 1.200 0 0 1 0 1.700l-4.500 4.500a1.200 1.200 0 0 1-1.700 0l-5-5A1.400 1.400 0 0 1 0 5.600zM2.800 1.700a1.100 1.100 0 1 0 0 2.200 1.100 1.100 0 0 0 0-2.200z" fill="#7e7e7e" fill-rule="evenodd"/></svg>
<div class="t" style="left:90px;top:453.0px;font-size:13px;color:#1e1e1e;">btnDelete <span style="font-size:11px;color:#777;font-weight:400;margin-left:0">Button</span></div>
<svg class="abs" style="left:614px;top:453.0px" width="12" height="12" viewBox="0 0 12 12"><path d="M5.200 6.800a2.600 2.600 0 0 1 0-3.700l1.800-1.800a2.600 2.600 0 0 1 3.700 3.700l-.9.900M6.800 5.200a2.600 2.600 0 0 1 0 3.700l-1.800 1.800a2.600 2.600 0 0 1-3.700-3.700l.9-.9" fill="none" stroke="#3cae1c" stroke-width="2.100" stroke-linecap="round"/></svg>
<div class="abs" style="left:0;top:527px;width:671px;height:47px;background:#fff;border-top:1px solid #e2e2e2"></div>
<div class="abs" style="left:483px;top:536px;width:76px;height:30px;background:#fff;border:1px solid #222;border-radius:4px"></div>
<div class="abs" style="left:577px;top:536px;width:76px;height:30px;background:#1a97cd;border-radius:4px"></div>
<div class="t" style="left:602px;top:547px;font-size:11px;font-weight:700;color:#fff">Save</div>
</div>
<div class="abs" style="left:670px;top:321px;width:253px;height:54px;border:10px solid #fdd040"></div>
<div class="abs" style="left:1207px;top:597px;width:64px;height:50px;border:10px solid #fdd040"></div>
<svg class="abs" style="left:960px;top:510px" width="240" height="170" viewBox="960 510 240 170"><path d="M988 536C1000 604 1066 631 1154 622" fill="none" stroke="#fdd040" stroke-width="13" stroke-linecap="round"/><path d="M1123 588L1157 621.500 1123 655.500" fill="none" stroke="#fdd040" stroke-width="13" stroke-linecap="round" stroke-linejoin="round"/></svg>
</div></body></html>
